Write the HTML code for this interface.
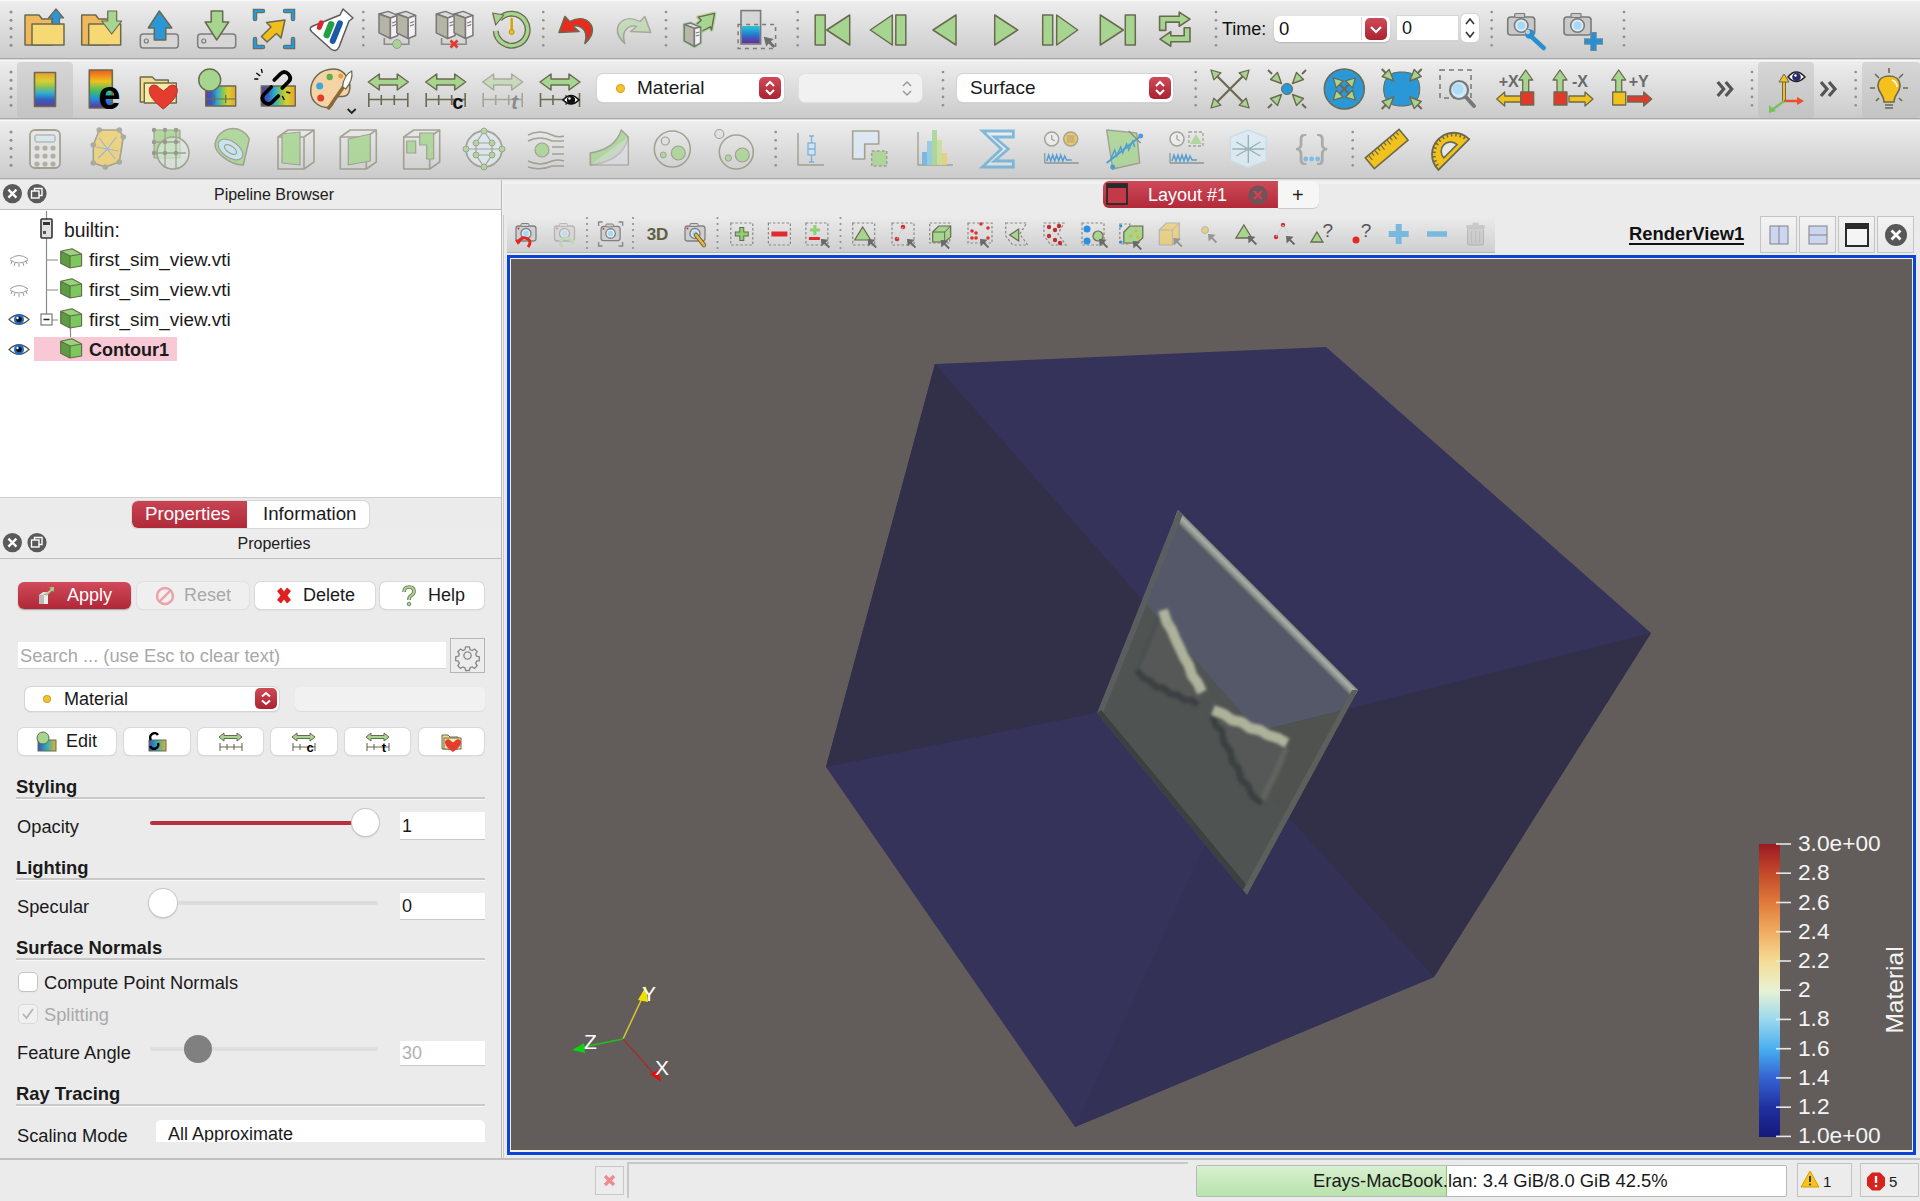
<!DOCTYPE html>
<html><head><meta charset="utf-8">
<style>
*{margin:0;padding:0;box-sizing:border-box}
html,body{width:1920px;height:1201px;overflow:hidden;background:#ebebeb;font-family:"Liberation Sans",sans-serif;color:#1a1a1a}
.a{position:absolute}
.tb{position:absolute;left:0;width:1920px;height:59px;background:linear-gradient(#eeeeee,#cbcbcb);border-bottom:1px solid #a9a9a9}
.tb:after{content:"";position:absolute;left:0;right:0;bottom:-2px;height:1px;background:#d9d9d9}
.tb{box-shadow:inset 0 1px #f9f9f9}
.pressed{position:absolute;background:linear-gradient(#d6d6d6,#c3c3c3);border-radius:4px}
.combo{position:absolute;height:28px;background:#fff;border-radius:6px;box-shadow:0 0 0 1px #d4d4d4,0 1px 1.5px #b9b9b9;font-size:19px;line-height:28px;white-space:nowrap}
.rb{position:absolute;width:22px;height:22px;border-radius:5px;background:linear-gradient(#cf4a57,#ab2232)}
.rb svg{position:absolute;left:0;top:0}
.hdr{position:absolute;left:0;width:501px;padding-left:47px;height:30px;background:#ececec;border-bottom:1px solid #bdbdbd;font-size:16px;text-align:center;line-height:29px;color:#202020}
.t{position:absolute;white-space:nowrap;line-height:1}
.btn{position:absolute;height:27px;background:#fff;border-radius:6px;box-shadow:0 0 0 1px #d9d9d9,0 1px 1.5px #c5c5c5;font-size:18px;line-height:27px;white-space:nowrap}
.sh{position:absolute;left:16px;width:469px;font-weight:bold;font-size:18.4px;line-height:1;white-space:nowrap}
.ul{position:absolute;left:16px;width:469px;height:2px;background:#c9c9c9;box-shadow:0 1px #f8f8f8}
.fld{position:absolute;background:#fff;font-size:18px;white-space:nowrap;line-height:1;box-shadow:0 1px #c8c8c8}
</style></head>
<body>
<div class="tb" style="top:0"></div>
<div class="tb" style="top:60px"></div>
<div class="tb" style="top:120px"></div>
<div class="pressed" style="left:17px;top:62px;width:56px;height:56px"></div>
<div class="pressed" style="left:1758px;top:62px;width:56px;height:56px"></div>
<div class="pressed" style="left:1862px;top:62px;width:58px;height:56px"></div>

<!-- time widgets row1 -->
<div class="t" style="left:1222px;top:20px;font-size:18px;color:#111">Time:</div>
<div class="a" style="left:1274px;top:16px;width:116px;height:26px;background:#fff;border-radius:6px;box-shadow:0 1px 1.5px #b5b5b5"></div>
<div class="a" style="left:1361px;top:17px;width:1px;height:23px;background:#d8d8d8"></div>
<div class="t" style="left:1279px;top:20px;font-size:18.5px;color:#111">0</div>
<div class="rb" style="left:1365px;top:18px;width:22px;height:22px"><svg width="22" height="22"><path d="M6,9 L11,14 L16,9" fill="none" stroke="#fff" stroke-width="2.2"/></svg></div>
<div class="a" style="left:1397px;top:16px;width:61px;height:24px;background:#fff;box-shadow:0 0 0 1px #d5d5d5,0 1px 1px #c0c0c0;font-size:18px;line-height:24px;padding-left:5px">0</div>
<div class="a" style="left:1461px;top:14px;width:18px;height:28px;background:#fff;border-radius:5px;box-shadow:0 0 0 1px #d5d5d5,0 1px 1px #bbb"><svg width="18" height="28"><path d="M5,10 L9,5 L13,10 M5,18 L9,23 L13,18" fill="none" stroke="#333" stroke-width="1.6"/></svg></div>

<!-- combos row2 -->
<div class="combo" style="left:597px;top:74px;width:187px"><span class="a" style="left:20px;top:11px;width:7px;height:7px;border-radius:50%;background:#f2c230;box-shadow:0 0 0 1px #d0a020"></span><span class="a" style="left:40px;top:0">Material</span><div class="rb" style="left:162px;top:3px"><svg width="22" height="22"><path d="M7,9 L11,5 L15,9 M7,13 L11,17 L15,13" fill="none" stroke="#fff" stroke-width="2"/></svg></div></div>
<div class="combo" style="left:799px;top:74px;width:123px;background:#f1f1f1;box-shadow:0 0 0 1px #e0e0e0,0 1px 1px #d0d0d0"><svg class="a" style="left:101px;top:5px" width="14" height="20"><path d="M3,7 L7,3 L11,7 M3,12 L7,16 L11,12" fill="none" stroke="#999" stroke-width="1.5"/></svg></div>
<div class="combo" style="left:957px;top:74px;width:216px"><span class="a" style="left:13px;top:0">Surface</span><div class="rb" style="left:192px;top:3px"><svg width="22" height="22"><path d="M7,9 L11,5 L15,9 M7,13 L11,17 L15,13" fill="none" stroke="#fff" stroke-width="2"/></svg></div></div>

<svg class="a" style="left:0;top:0" width="1920" height="180"><circle cx="11" cy="12" r="1.5" fill="#8f8f8f"/><circle cx="11" cy="20.3" r="1.5" fill="#8f8f8f"/><circle cx="11" cy="28.6" r="1.5" fill="#8f8f8f"/><circle cx="11" cy="36.9" r="1.5" fill="#8f8f8f"/><circle cx="11" cy="45.2" r="1.5" fill="#8f8f8f"/><g transform="translate(45,29)"><path d="M-20,-14 h14 l3,4 h10 v26 h-27z" fill="#f0b85c" stroke="#6b6950" stroke-width="1.5" stroke-linejoin="round"/><rect x="-13" y="-5" width="32" height="21" fill="#f6d874" stroke="#6b6950" stroke-width="1.5" stroke-linejoin="round"/><path d="M11,-20 L18.5,-11 L14.5,-11 L14.5,-5 L7.5,-5 L7.5,-11 L3.5,-11Z" fill="#2a97d6" stroke="#6b6950" stroke-width="1.2" stroke-linejoin="round"/></g><g transform="translate(101.7,29)"><path d="M-20,-14 h14 l3,4 h10 v26 h-27z" fill="#f0b85c" stroke="#6b6950" stroke-width="1.5" stroke-linejoin="round"/><rect x="-13" y="-5" width="32" height="21" fill="#f6d874" stroke="#6b6950" stroke-width="1.5" stroke-linejoin="round"/><path d="M6,-18 h9 v10 h5 l-10,13 l-10,-13 h6z" fill="#a6d590" stroke="#6b6950" stroke-width="1.2" stroke-linejoin="round"/></g><g transform="translate(159.3,29)"><rect x="-19" y="5" width="38" height="14" rx="3" fill="#d6d6d6" stroke="#7d7d7d" stroke-width="1.5"/><circle cx="-13" cy="12" r="2" fill="none" stroke="#7d7d7d" stroke-width="1.2"/><path d="M0,-18 L12.5,-1 L6.5,-1 L6.5,11 L-5,11 L-5,-1 L-11,-1Z" fill="#2a97d6" stroke="#6b6950" stroke-width="1.5" stroke-linejoin="round"/></g><g transform="translate(216.7,29)"><rect x="-19" y="5" width="38" height="14" rx="3" fill="#d6d6d6" stroke="#7d7d7d" stroke-width="1.5"/><circle cx="-13" cy="12" r="2" fill="none" stroke="#7d7d7d" stroke-width="1.2"/><path d="M-5.5,-18 h11.5 v11 h6 L0,11 L-11.5,-7 h6z" fill="#a6d590" stroke="#6b6950" stroke-width="1.5" stroke-linejoin="round"/></g><g transform="translate(274,29)"><path d="M-19,-10 V-18 H-11" fill="none" stroke="#6b6950" stroke-width="4.5" stroke-linecap="round"/><path d="M-19,-10 V-18 H-11" fill="none" stroke="#2a97d6" stroke-width="2.5" stroke-linecap="square"/><path d="M-19,10 V18 H-11" fill="none" stroke="#6b6950" stroke-width="4.5" stroke-linecap="round"/><path d="M-19,10 V18 H-11" fill="none" stroke="#2a97d6" stroke-width="2.5" stroke-linecap="square"/><path d="M19,-10 V-18 H11" fill="none" stroke="#6b6950" stroke-width="4.5" stroke-linecap="round"/><path d="M19,-10 V-18 H11" fill="none" stroke="#2a97d6" stroke-width="2.5" stroke-linecap="square"/><path d="M19,10 V18 H11" fill="none" stroke="#6b6950" stroke-width="4.5" stroke-linecap="round"/><path d="M19,10 V18 H11" fill="none" stroke="#2a97d6" stroke-width="2.5" stroke-linecap="square"/><path d="M11,-9 L7,9 L2.5,4.5 L-7,13 L-12.5,7.5 L-3,-2 L-7.5,-6.5Z" fill="#f1be1c" stroke="#6b6950" stroke-width="1.5" stroke-linejoin="round"/></g><g transform="translate(330,29)"><path d="M13,-20 L23,-11 L19,-8 L9,18 Q6,24 1,20 L-18,3 Q-22,-1 -17,-3 L10,-14Z" fill="#fff" stroke="#5a5a5a" stroke-width="1.5" stroke-linejoin="round"/><g transform="rotate(22)"><rect x="-12" y="-3" width="5" height="10" rx="2.5" fill="#d8262c" transform="translate(-1,-2)"/><rect x="-4" y="-8" width="6.5" height="18" rx="3" fill="#22a043"/><rect x="4" y="-12" width="6" height="25" rx="3" fill="#1d59a8"/></g></g><g transform="translate(396.7,29)"><path d="M-12.4,9 V15.2 H12.1 V9.5" fill="none" stroke="#8a8a8a" stroke-width="1.6"/><g transform="translate(0,0)"><path d="M-17.7,-15 L-8.5,-17.6 L1.1,-13.6 L-6.3,-11Z" fill="#d9dcdc" stroke="#787878" stroke-width="1.5" stroke-linejoin="round"/><path d="M-17.7,-15 L-6.3,-11 L-6.3,9.5 L-17.7,3.9Z" fill="#b5b5a5" stroke="#787878" stroke-width="1.5" stroke-linejoin="round"/><path d="M-6.3,-11 L1.1,-13.6 L1.1,6.5 L-6.3,9.5Z" fill="#f6f0f4" stroke="#787878" stroke-width="1.5" stroke-linejoin="round"/><path d="M-4.5,-6 L-0.5,-7.5 M-4.5,-3 L-0.5,-4.5" stroke="#787878" stroke-width="1.2"/></g><g transform="translate(17.8,0)"><path d="M-17.7,-15 L-8.5,-17.6 L1.1,-13.6 L-6.3,-11Z" fill="#d9dcdc" stroke="#787878" stroke-width="1.5" stroke-linejoin="round"/><path d="M-17.7,-15 L-6.3,-11 L-6.3,9.5 L-17.7,3.9Z" fill="#b5b5a5" stroke="#787878" stroke-width="1.5" stroke-linejoin="round"/><path d="M-6.3,-11 L1.1,-13.6 L1.1,6.5 L-6.3,9.5Z" fill="#f6f0f4" stroke="#787878" stroke-width="1.5" stroke-linejoin="round"/><path d="M-4.5,-6 L-0.5,-7.5 M-4.5,-3 L-0.5,-4.5" stroke="#787878" stroke-width="1.2"/></g><circle cx="0.3" cy="15" r="4.4" fill="#a6d590" stroke="#999" stroke-width="1"/></g><g transform="translate(454,29)"><path d="M-12.4,9 V15.2 H12.1 V9.5" fill="none" stroke="#8a8a8a" stroke-width="1.6"/><g transform="translate(0,0)"><path d="M-17.7,-15 L-8.5,-17.6 L1.1,-13.6 L-6.3,-11Z" fill="#d9dcdc" stroke="#787878" stroke-width="1.5" stroke-linejoin="round"/><path d="M-17.7,-15 L-6.3,-11 L-6.3,9.5 L-17.7,3.9Z" fill="#b5b5a5" stroke="#787878" stroke-width="1.5" stroke-linejoin="round"/><path d="M-6.3,-11 L1.1,-13.6 L1.1,6.5 L-6.3,9.5Z" fill="#f6f0f4" stroke="#787878" stroke-width="1.5" stroke-linejoin="round"/><path d="M-4.5,-6 L-0.5,-7.5 M-4.5,-3 L-0.5,-4.5" stroke="#787878" stroke-width="1.2"/></g><g transform="translate(17.8,0)"><path d="M-17.7,-15 L-8.5,-17.6 L1.1,-13.6 L-6.3,-11Z" fill="#d9dcdc" stroke="#787878" stroke-width="1.5" stroke-linejoin="round"/><path d="M-17.7,-15 L-6.3,-11 L-6.3,9.5 L-17.7,3.9Z" fill="#b5b5a5" stroke="#787878" stroke-width="1.5" stroke-linejoin="round"/><path d="M-6.3,-11 L1.1,-13.6 L1.1,6.5 L-6.3,9.5Z" fill="#f6f0f4" stroke="#787878" stroke-width="1.5" stroke-linejoin="round"/><path d="M-4.5,-6 L-0.5,-7.5 M-4.5,-3 L-0.5,-4.5" stroke="#787878" stroke-width="1.2"/></g><path d="M-3.5,11.5 l7,7 M3.5,11.5 l-7,7" stroke="#e23a2c" stroke-width="2.8"/></g><g transform="translate(511.7,29)"><path d="M-12,-10 A16,16 0 1 1 -16,2" fill="none" stroke="#6b6950" stroke-width="6"/><path d="M-12,-10 A16,16 0 1 1 -16,2" fill="none" stroke="#a6d590" stroke-width="3.4"/><path d="M-19,-16 L-8,-14 L-16,-4z" fill="#a6d590" stroke="#6b6950" stroke-width="1.2" stroke-linejoin="round"/><path d="M0,-10 v12" stroke="#d9a400" stroke-width="2.5" stroke-linecap="round"/><circle cx="0" cy="3" r="2.5" fill="#f1be1c" stroke="#b08800" stroke-width="0.8"/></g><g transform="translate(576.7,29)"><path transform="translate(0,1.5) scale(1.18,1)" d="M-15,2 L-10,-14 L-6,-9 Q6,-16 12,-6 Q16,3 7,13 Q10,2 4,-3 Q0,-6 -3,-4 L2,1Z" fill="#ea2a1e" stroke="#6b6950" stroke-width="1.4" stroke-linejoin="round"/></g><g transform="translate(633,29)"><g opacity="0.45"><path transform="translate(0,1.5) scale(1.18,1)" d="M15,2 L10,-14 L6,-9 Q-6,-16 -12,-6 Q-16,3 -7,13 Q-10,2 -4,-3 Q0,-6 3,-4 L-2,1Z" fill="#a6d590" stroke="#6b6950" stroke-width="1.4" stroke-linejoin="round"/></g></g><g transform="translate(698.3,29)"><path d="M2.9,2.5 L12,-2.2 L13.25,0.9 L16.2,-15.6 L-0.2,-11.9 L2.9,-8.75 L-1.4,-5Z" fill="#a6d590" stroke="#a6d590" stroke-width="4" stroke-linejoin="round" opacity="0.8"/><path d="M2.9,2.5 L12,-2.2 L13.25,0.9 L16.2,-15.6 L-0.2,-11.9 L2.9,-8.75 L-1.4,-5Z" fill="#a6d590" stroke="#6b6950" stroke-width="1.4" stroke-linejoin="round"/><path d="M-14,-4.4 L-7.7,-5.9 L2.3,-1.9 L-3.9,-0.6 L-3.9,17.5 L-14,11.9Z M2.3,-1.9 L2.3,13.9 L-3.9,17.5" fill="#a6d590" stroke="#a6d590" stroke-width="3.5" stroke-linejoin="round" opacity="0.8"/><path d="M-14,-4.4 L-7.7,-5.9 L2.3,-1.9 L-3.9,-0.6Z" fill="#dadcdc" stroke="#787878" stroke-width="1.5" stroke-linejoin="round"/><path d="M-14,-4.4 L-3.9,-0.6 L-3.9,17.5 L-14,11.9Z" fill="#b8b8a8" stroke="#787878" stroke-width="1.5" stroke-linejoin="round"/><path d="M-3.9,-0.6 L2.3,-1.9 L2.3,13.9 L-3.9,17.5Z" fill="#f6f0f4" stroke="#787878" stroke-width="1.5" stroke-linejoin="round"/><path d="M-2.5,4 L1,3 M-2.5,7 L1,6" stroke="#787878" stroke-width="1.1"/></g><g transform="translate(756.7,29)"><defs><linearGradient id="gcs" x1="0" y1="0" x2="0" y2="1"><stop offset="0" stop-color="#3ac09a"/><stop offset="0.12" stop-color="#22b8e0"/><stop offset="0.55" stop-color="#2a70c8"/><stop offset="1" stop-color="#6a2aa0"/></linearGradient></defs><rect x="-15.7" y="-18.4" width="19.6" height="33.4" fill="#d6d6d6" stroke="#7a7a7a" stroke-width="1.6"/><rect x="-14.9" y="-3" width="18" height="17.2" fill="url(#gcs)"/><rect x="-18.6" y="-4.4" width="37.5" height="23.8" fill="none" stroke="#7a7a7a" stroke-width="1.5" stroke-dasharray="4,4"/><path d="M7,7.8 L17,10 L14,12.5 L18.5,17 L16.5,19 L12,14.5 L9.5,17.5Z" fill="#6e6e6e"/></g><g transform="translate(832.7,29)"><rect x="-17.5" y="-14" width="10" height="30" fill="#a6d590" stroke="#6b6950" stroke-width="1.5" stroke-linejoin="round"/><path d="M17,-14 L-6,1 L17,16Z" fill="#a6d590" stroke="#6b6950" stroke-width="1.5" stroke-linejoin="round"/></g><g transform="translate(889.3,29)"><path d="M3,-14 L-19,1 L3,16Z" fill="#a6d590" stroke="#6b6950" stroke-width="1.5" stroke-linejoin="round"/><rect x="6.5" y="-14" width="10" height="30" fill="#a6d590" stroke="#6b6950" stroke-width="1.5" stroke-linejoin="round"/></g><g transform="translate(944,29)"><path d="M12,-14 L-11,1 L12,16Z" fill="#a6d590" stroke="#6b6950" stroke-width="1.5" stroke-linejoin="round"/></g><g transform="translate(1005.7,29)"><path d="M-11,-14 L12,1 L-11,16Z" fill="#a6d590" stroke="#6b6950" stroke-width="1.5" stroke-linejoin="round"/></g><g transform="translate(1060.7,29)"><rect x="-18" y="-14" width="10" height="30" fill="#a6d590" stroke="#6b6950" stroke-width="1.5" stroke-linejoin="round"/><path d="M-4,-14 L17,1 L-4,16Z" fill="#a6d590" stroke="#6b6950" stroke-width="1.5" stroke-linejoin="round"/></g><g transform="translate(1117.3,29)"><path d="M-17,-14 L6,1 L-17,16Z" fill="#a6d590" stroke="#6b6950" stroke-width="1.5" stroke-linejoin="round"/><rect x="8" y="-14" width="10" height="30" fill="#a6d590" stroke="#6b6950" stroke-width="1.5" stroke-linejoin="round"/></g><g transform="translate(1175,29)"><path d="M-15.4,-12.75 H4.2 V-16.9 L15,-9.8 L4.2,-2.75 V-6.9 H-9.2 V1.4 H-15.4Z" fill="#a6d590" stroke="#6b6950" stroke-width="1.6" stroke-linejoin="round"/><path d="M15,-1.3 V12.7 H-4.2 V17.25 L-15,10.2 L-4.2,2.7 V6.8 H9.2 V-1.3Z" fill="#a6d590" stroke="#6b6950" stroke-width="1.6" stroke-linejoin="round"/></g><g transform="translate(1526.7,29)"><rect x="-19" y="-12" width="27" height="18" rx="3" fill="#c9c9c9" stroke="#7a7a7a" stroke-width="1.6"/><rect x="-12" y="-15.5" width="10" height="4" rx="1" fill="#c9c9c9" stroke="#7a7a7a" stroke-width="1.2"/><circle cx="-5.5" cy="-3.5" r="6.8" fill="#d9ecf8" stroke="#7a7a7a" stroke-width="1.6"/><circle cx="-5.5" cy="-3.5" r="4" fill="#a9d8f4"/><path d="M4,7 L17,19" stroke="#2a8fcf" stroke-width="4.5" stroke-linecap="round"/><circle cx="3" cy="5" r="4.8" fill="#2a8fcf"/><circle cx="1" cy="3" r="2.3" fill="#c9c9c9"/></g><g transform="translate(1583,29)"><rect x="-19" y="-12" width="27" height="18" rx="3" fill="#c9c9c9" stroke="#7a7a7a" stroke-width="1.6"/><rect x="-12" y="-15.5" width="10" height="4" rx="1" fill="#c9c9c9" stroke="#7a7a7a" stroke-width="1.2"/><circle cx="-5.5" cy="-3.5" r="6.8" fill="#d9ecf8" stroke="#7a7a7a" stroke-width="1.6"/><circle cx="-5.5" cy="-3.5" r="4" fill="#a9d8f4"/><path d="M10.5,3 v19 M1,12.5 h19" stroke="#6b8aa0" stroke-width="6.5"/><path d="M10.5,4 v17 M2,12.5 h17" stroke="#2a8fcf" stroke-width="4.5"/></g><circle cx="363.3" cy="12" r="1.3" fill="#8f8f8f"/><circle cx="363.3" cy="20.3" r="1.3" fill="#8f8f8f"/><circle cx="363.3" cy="28.6" r="1.3" fill="#8f8f8f"/><circle cx="363.3" cy="36.9" r="1.3" fill="#8f8f8f"/><circle cx="363.3" cy="45.2" r="1.3" fill="#8f8f8f"/><circle cx="543.3" cy="12" r="1.3" fill="#8f8f8f"/><circle cx="543.3" cy="20.3" r="1.3" fill="#8f8f8f"/><circle cx="543.3" cy="28.6" r="1.3" fill="#8f8f8f"/><circle cx="543.3" cy="36.9" r="1.3" fill="#8f8f8f"/><circle cx="543.3" cy="45.2" r="1.3" fill="#8f8f8f"/><circle cx="666" cy="12" r="1.3" fill="#8f8f8f"/><circle cx="666" cy="20.3" r="1.3" fill="#8f8f8f"/><circle cx="666" cy="28.6" r="1.3" fill="#8f8f8f"/><circle cx="666" cy="36.9" r="1.3" fill="#8f8f8f"/><circle cx="666" cy="45.2" r="1.3" fill="#8f8f8f"/><circle cx="797.7" cy="12" r="1.3" fill="#8f8f8f"/><circle cx="797.7" cy="20.3" r="1.3" fill="#8f8f8f"/><circle cx="797.7" cy="28.6" r="1.3" fill="#8f8f8f"/><circle cx="797.7" cy="36.9" r="1.3" fill="#8f8f8f"/><circle cx="797.7" cy="45.2" r="1.3" fill="#8f8f8f"/><circle cx="1216" cy="12" r="1.3" fill="#8f8f8f"/><circle cx="1216" cy="20.3" r="1.3" fill="#8f8f8f"/><circle cx="1216" cy="28.6" r="1.3" fill="#8f8f8f"/><circle cx="1216" cy="36.9" r="1.3" fill="#8f8f8f"/><circle cx="1216" cy="45.2" r="1.3" fill="#8f8f8f"/><circle cx="1491.7" cy="12" r="1.3" fill="#8f8f8f"/><circle cx="1491.7" cy="20.3" r="1.3" fill="#8f8f8f"/><circle cx="1491.7" cy="28.6" r="1.3" fill="#8f8f8f"/><circle cx="1491.7" cy="36.9" r="1.3" fill="#8f8f8f"/><circle cx="1491.7" cy="45.2" r="1.3" fill="#8f8f8f"/><circle cx="1624" cy="12" r="1.3" fill="#8f8f8f"/><circle cx="1624" cy="20.3" r="1.3" fill="#8f8f8f"/><circle cx="1624" cy="28.6" r="1.3" fill="#8f8f8f"/><circle cx="1624" cy="36.9" r="1.3" fill="#8f8f8f"/><circle cx="1624" cy="45.2" r="1.3" fill="#8f8f8f"/><circle cx="11" cy="72" r="1.5" fill="#8f8f8f"/><circle cx="11" cy="80.3" r="1.5" fill="#8f8f8f"/><circle cx="11" cy="88.6" r="1.5" fill="#8f8f8f"/><circle cx="11" cy="96.9" r="1.5" fill="#8f8f8f"/><circle cx="11" cy="105.2" r="1.5" fill="#8f8f8f"/><g transform="translate(45,89)"><defs><linearGradient id="gcb" x1="0" y1="0" x2="0" y2="1"><stop offset="0" stop-color="#e8a030"/><stop offset="0.25" stop-color="#d8d030"/><stop offset="0.45" stop-color="#80c060"/><stop offset="0.6" stop-color="#30b0d0"/><stop offset="0.8" stop-color="#3060c0"/><stop offset="1" stop-color="#6a3a98"/></linearGradient></defs><rect x="-10.5" y="-16.5" width="21" height="34" fill="url(#gcb)" stroke="#6b6950" stroke-width="1.6" stroke-linejoin="round"/></g><g transform="translate(103.3,89)"><defs><linearGradient id="gce" x1="0" y1="0" x2="0" y2="1"><stop offset="0" stop-color="#f05a1a"/><stop offset="0.3" stop-color="#f0c020"/><stop offset="0.55" stop-color="#40c060"/><stop offset="0.75" stop-color="#2090e0"/><stop offset="1" stop-color="#6030a0"/></linearGradient></defs><rect x="-14" y="-19" width="23" height="38" fill="url(#gce)" stroke="#6b6950" stroke-width="1.6" stroke-linejoin="round"/><text x="6" y="19.5" font-family="Liberation Sans" font-weight="bold" font-size="40" text-anchor="middle" fill="#000">e</text></g><g transform="translate(159.3,89)"><path d="M-19,-12 h12 l3,3 h13 v22 h-28z" fill="#f3dc8c" stroke="#6b6950" stroke-width="1.4" stroke-linejoin="round"/><rect x="-15" y="-6" width="32" height="20" fill="#f8eba8" stroke="#6b6950" stroke-width="1.4" stroke-linejoin="round"/><path d="M4,20 C-6,12 -10,7 -10,1 C-10,-4 -4,-6 0,-1 L4,2 L8,-1 C12,-6 18,-4 18,1 C18,7 14,12 4,20Z" fill="#e43c2e" stroke="#b7302a" stroke-width="1"/></g><g transform="translate(216.7,89)"><defs><linearGradient id="gcm1" x1="1" y1="0" x2="0" y2="0"><stop offset="0" stop-color="#e8a030"/><stop offset="0.25" stop-color="#d8d030"/><stop offset="0.45" stop-color="#80c060"/><stop offset="0.6" stop-color="#30b0d0"/><stop offset="0.8" stop-color="#3060c0"/><stop offset="1" stop-color="#6a3a98"/></linearGradient></defs><rect x="-11" y="-3" width="30" height="20" fill="url(#gcm1)" stroke="#6b6950" stroke-width="1.4" stroke-linejoin="round"/><path d="M-11,10 h30 M-2,6 v8 M9,6 v8" stroke="#6b6950" stroke-width="1.2"/><circle cx="-7" cy="-9" r="11" fill="#a6d590" stroke="#6b6950" stroke-width="1.4" stroke-linejoin="round"/></g><g transform="translate(273.3,89)"><defs><linearGradient id="gcm2" x1="1" y1="0" x2="0" y2="0"><stop offset="0" stop-color="#e8a030"/><stop offset="0.25" stop-color="#d8d030"/><stop offset="0.45" stop-color="#80c060"/><stop offset="0.6" stop-color="#30b0d0"/><stop offset="0.8" stop-color="#3060c0"/><stop offset="1" stop-color="#6a3a98"/></linearGradient></defs><rect x="-12" y="-3" width="34" height="20" fill="url(#gcm2)" stroke="#6b6950" stroke-width="1.4" stroke-linejoin="round"/><path d="M1,-9 L7,-15 Q11,-19 15,-15 Q19,-11 15,-7 L9,-1" fill="none" stroke="#000" stroke-width="3.8" stroke-linecap="round"/><path d="M-2,-2 L-9,5 Q-13,9 -9,13 Q-5,17 -1,13 L5,7" fill="none" stroke="#000" stroke-width="3.8" stroke-linecap="round"/><path d="M-17,-16 l4,3 M-12,-20 l1,4 M-19,-10 l4,0 M13,3 l4,1 M9,7 l2,4" stroke="#000" stroke-width="1.3"/></g><g transform="translate(331.7,89)"><path d="M2,-20 C-12,-20 -21,-10 -21,2 C-21,14 -10,20 -2,18 C4,16 0,10 4,8 C8,6 14,10 17,4 C21,-6 14,-20 2,-20Z" fill="#f5d3a5" stroke="#6b6950" stroke-width="1.5"/><circle cx="-12" cy="-3" r="3.5" fill="#3aa8e0"/><circle cx="-2" cy="-12" r="3.2" fill="#5fae4a"/><circle cx="-11" cy="9" r="3.5" fill="#e23a2c"/><circle cx="9" cy="-13" r="2.5" fill="#e8a030"/><path d="M-3,19 L13,-4" stroke="#8a6a3a" stroke-width="3.5" stroke-linecap="round"/><path d="M11,-2 C11,-10 16,-16 20,-18 C21,-13 19,-6 14,0Z" fill="#fff" stroke="#6b6950" stroke-width="1.2"/><path d="M16,20 l4,4 l4,-4" fill="none" stroke="#222" stroke-width="1.8"/></g><g transform="translate(388.3,89)"><g opacity="1"><path d="M-20,-7 L-9,-15 V-10 H9 V-15 L20,-7 L9,1 V-4 H-9 V1Z" fill="#a6d590" stroke="#6b6950" stroke-width="1.5" stroke-linejoin="round"/><path d="M-19.5,10.5 H19.5 M-19.5,4 v14 M19.5,4 v14 M-7,6 v10 M6,6 v10" stroke="#6b6950" stroke-width="1.6"/></g></g><g transform="translate(445.7,89)"><g opacity="1"><path d="M-20,-7 L-9,-15 V-10 H9 V-15 L20,-7 L9,1 V-4 H-9 V1Z" fill="#a6d590" stroke="#6b6950" stroke-width="1.5" stroke-linejoin="round"/><path d="M-19.5,10.5 H19.5 M-19.5,4 v14 M19.5,4 v14 M-7,6 v10 M6,6 v10" stroke="#6b6950" stroke-width="1.6"/></g><text x="12" y="20" font-family="Liberation Sans" font-weight="bold" font-size="20" text-anchor="middle" fill="#111">c</text></g><g transform="translate(502.7,89)"><g opacity="0.45"><path d="M-20,-7 L-9,-15 V-10 H9 V-15 L20,-7 L9,1 V-4 H-9 V1Z" fill="#a6d590" stroke="#6b6950" stroke-width="1.5" stroke-linejoin="round"/><path d="M-19.5,10.5 H19.5 M-19.5,4 v14 M19.5,4 v14 M-7,6 v10 M6,6 v10" stroke="#6b6950" stroke-width="1.6"/></g><text x="12" y="20" font-family="Liberation Sans" font-weight="bold" font-style="italic" font-size="20" text-anchor="middle" fill="#8a8a8a">t</text></g><g transform="translate(560,89)"><g opacity="1"><path d="M-20,-7 L-9,-15 V-10 H9 V-15 L20,-7 L9,1 V-4 H-9 V1Z" fill="#a6d590" stroke="#6b6950" stroke-width="1.5" stroke-linejoin="round"/><path d="M-19.5,10.5 H19.5 M-19.5,4 v14 M19.5,4 v14 M-7,6 v10 M6,6 v10" stroke="#6b6950" stroke-width="1.6"/></g><path d="M3,11 Q11,2 19,11 Q11,19 3,11Z" fill="#fff" stroke="#111" stroke-width="1.6"/><circle cx="11" cy="11" r="4.2" fill="#111"/><circle cx="9.5" cy="9.5" r="1.2" fill="#fff"/></g><g transform="translate(1230,89)"><path d="M-14,-14 L14,14 M14,-14 L-14,14" stroke="#6b6950" stroke-width="2.2"/><path d="M0,0 L-9,-5 L-9,5Z" transform="translate(19,-19) rotate(-45)" fill="#a6d590" stroke="#6b6950" stroke-width="1.3" stroke-linejoin="round"/><path d="M0,0 L-9,-5 L-9,5Z" transform="translate(-19,-19) rotate(-135)" fill="#a6d590" stroke="#6b6950" stroke-width="1.3" stroke-linejoin="round"/><path d="M0,0 L-9,-5 L-9,5Z" transform="translate(19,19) rotate(45)" fill="#a6d590" stroke="#6b6950" stroke-width="1.3" stroke-linejoin="round"/><path d="M0,0 L-9,-5 L-9,5Z" transform="translate(-19,19) rotate(135)" fill="#a6d590" stroke="#6b6950" stroke-width="1.3" stroke-linejoin="round"/></g><g transform="translate(1287,89)"><circle cx="0" cy="0" r="5.5" fill="#2a97d6" stroke="#6b6950" stroke-width="1"/><g transform="rotate(0)"><path d="M15,-15 L19,-19" stroke="#6b6950" stroke-width="2"/><path d="M5.5,-5.5 L16.5,-9.5 L9.5,-16.5Z" fill="#a6d590" stroke="#6b6950" stroke-width="1.4" stroke-linejoin="round"/></g><g transform="rotate(90)"><path d="M15,-15 L19,-19" stroke="#6b6950" stroke-width="2"/><path d="M5.5,-5.5 L16.5,-9.5 L9.5,-16.5Z" fill="#a6d590" stroke="#6b6950" stroke-width="1.4" stroke-linejoin="round"/></g><g transform="rotate(180)"><path d="M15,-15 L19,-19" stroke="#6b6950" stroke-width="2"/><path d="M5.5,-5.5 L16.5,-9.5 L9.5,-16.5Z" fill="#a6d590" stroke="#6b6950" stroke-width="1.4" stroke-linejoin="round"/></g><g transform="rotate(270)"><path d="M15,-15 L19,-19" stroke="#6b6950" stroke-width="2"/><path d="M5.5,-5.5 L16.5,-9.5 L9.5,-16.5Z" fill="#a6d590" stroke="#6b6950" stroke-width="1.4" stroke-linejoin="round"/></g></g><g transform="translate(1344.3,89)"><circle cx="0" cy="0" r="20" fill="#2a97d6" stroke="#6b6950" stroke-width="1.5"/><path d="M-9,-9 L9,9 M9,-9 L-9,9" stroke="#6b6950" stroke-width="1.8"/><path d="M0,0 L-9,-5 L-9,5Z" transform="translate(11,-11) rotate(-45)" fill="#a6d590" stroke="#6b6950" stroke-width="1.3" stroke-linejoin="round"/><path d="M0,0 L-9,-5 L-9,5Z" transform="translate(-11,-11) rotate(-135)" fill="#a6d590" stroke="#6b6950" stroke-width="1.3" stroke-linejoin="round"/><path d="M0,0 L-9,-5 L-9,5Z" transform="translate(11,11) rotate(45)" fill="#a6d590" stroke="#6b6950" stroke-width="1.3" stroke-linejoin="round"/><path d="M0,0 L-9,-5 L-9,5Z" transform="translate(-11,11) rotate(135)" fill="#a6d590" stroke="#6b6950" stroke-width="1.3" stroke-linejoin="round"/></g><g transform="translate(1401.7,89)"><rect x="-18" y="-17" width="36" height="34" rx="15" fill="#2a97d6" stroke="#6b6950" stroke-width="1"/><g transform="rotate(0)"><path d="M16,-16 L20,-20" stroke="#6b6950" stroke-width="2"/><path d="M8,-8 L19.5,-12.5 L12.5,-19.5Z" fill="#a6d590" stroke="#6b6950" stroke-width="1.4" stroke-linejoin="round"/></g><g transform="rotate(90)"><path d="M16,-16 L20,-20" stroke="#6b6950" stroke-width="2"/><path d="M8,-8 L19.5,-12.5 L12.5,-19.5Z" fill="#a6d590" stroke="#6b6950" stroke-width="1.4" stroke-linejoin="round"/></g><g transform="rotate(180)"><path d="M16,-16 L20,-20" stroke="#6b6950" stroke-width="2"/><path d="M8,-8 L19.5,-12.5 L12.5,-19.5Z" fill="#a6d590" stroke="#6b6950" stroke-width="1.4" stroke-linejoin="round"/></g><g transform="rotate(270)"><path d="M16,-16 L20,-20" stroke="#6b6950" stroke-width="2"/><path d="M8,-8 L19.5,-12.5 L12.5,-19.5Z" fill="#a6d590" stroke="#6b6950" stroke-width="1.4" stroke-linejoin="round"/></g></g><g transform="translate(1459,89)"><rect x="-19" y="-19" width="31" height="28" fill="none" stroke="#777" stroke-width="1.5" stroke-dasharray="5,4"/><path d="M6,7 L15,17" stroke="#777" stroke-width="4" stroke-linecap="round"/><circle cx="0" cy="1" r="9" fill="#cfe8f7" stroke="#777" stroke-width="2.2"/><circle cx="-1" cy="0" r="5.5" fill="#aedcf5"/></g><g transform="translate(1516.7,89)"><path d="M6,14 V-9 H2 L9,-19 L16,-9 H12 V14Z" fill="#a6d590" stroke="#6b6950" stroke-width="1.3" stroke-linejoin="round"/><path d="M6,7 H-12 V3 L-20,10 L-12,17 V13 H6Z" fill="#f1c21c" stroke="#6b6950" stroke-width="1.3" stroke-linejoin="round"/><rect x="4" y="3" width="13" height="13" fill="#e03a2a" stroke="#6b6950" stroke-width="1.3" stroke-linejoin="round"/><text x="-8" y="-2" font-family="Liberation Sans" font-weight="bold" font-size="16" text-anchor="middle" fill="#6a6a6a">+X</text></g><g transform="translate(1573,89)"><path d="M-16,14 V-9 H-20 L-13,-19 L-6,-9 H-10 V14Z" fill="#a6d590" stroke="#6b6950" stroke-width="1.3" stroke-linejoin="round"/><path d="M-4,7 H12 V3 L20,10 L12,17 V13 H-4Z" fill="#f1c21c" stroke="#6b6950" stroke-width="1.3" stroke-linejoin="round"/><rect x="-19" y="3" width="13" height="13" fill="#e03a2a" stroke="#6b6950" stroke-width="1.3" stroke-linejoin="round"/><text x="7" y="-2" font-family="Liberation Sans" font-weight="bold" font-size="16" text-anchor="middle" fill="#6a6a6a">-X</text></g><g transform="translate(1631.7,89)"><path d="M-16,14 V-9 H-20 L-13,-19 L-6,-9 H-10 V14Z" fill="#a6d590" stroke="#6b6950" stroke-width="1.3" stroke-linejoin="round"/><path d="M-4,7 H12 V3 L20,10 L12,17 V13 H-4Z" fill="#e03a2a" stroke="#6b6950" stroke-width="1.3" stroke-linejoin="round"/><rect x="-19" y="3" width="13" height="13" fill="#f1c21c" stroke="#6b6950" stroke-width="1.3" stroke-linejoin="round"/><text x="7" y="-2" font-family="Liberation Sans" font-weight="bold" font-size="16" text-anchor="middle" fill="#6a6a6a">+Y</text></g><g transform="translate(1725.7,89)"><path d="M-8,-7 L-2,0 L-8,7 M0,-7 L6,0 L0,7" fill="none" stroke="#555" stroke-width="3.2"/></g><g transform="translate(1786,89)"><path d="M-2,12 V-8" stroke="#6b6950" stroke-width="4"/><path d="M-2,12 V-8" stroke="#f1c21c" stroke-width="2"/><path d="M-7,-7 L-2,-15 L3,-7Z" fill="#f1c21c" stroke="#6b6950" stroke-width="1"/><path d="M-2,12 H12" stroke="#e8502a" stroke-width="2.5"/><path d="M11,8 L18,12 L11,16Z" fill="#e8502a"/><path d="M-2,12 L-14,21" stroke="#7ac05a" stroke-width="2.5"/><path d="M-17,16 L-17,24 L-10,22Z" fill="#7ac05a"/><path d="M2,-12 Q10,-22 19,-12 Q10,-3 2,-12Z" fill="#fff" stroke="#222" stroke-width="1.5"/><circle cx="10.5" cy="-12" r="4.3" fill="#2a2a6a"/><circle cx="9.5" cy="-13.5" r="1.2" fill="#fff"/></g><g transform="translate(1829,89)"><path d="M-8,-7 L-2,0 L-8,7 M0,-7 L6,0 L0,7" fill="none" stroke="#555" stroke-width="3.2"/></g><g transform="translate(1889,89)"><path d="M0,-21 v5 M-14,-15 l4,4 M14,-15 l-4,4 M-19,-1 h5 M19,-1 h-5 M-13,12 l3,-3 M13,12 l-3,-3" stroke="#6b6950" stroke-width="1.6"/><path d="M-5,13 C-5,6 -11,3 -11,-3 C-11,-10 -6,-13 0,-13 C6,-13 11,-10 11,-3 C11,3 5,6 5,13Z" fill="#f5c11c" stroke="#6b6950" stroke-width="1.6"/><path d="M-4,16 h8 M-4,19 h8" stroke="#6b6950" stroke-width="1.6"/><path d="M3,-9 q5,2 5,7" fill="none" stroke="#fff" stroke-width="1.5"/></g><circle cx="943" cy="72" r="1.3" fill="#8f8f8f"/><circle cx="943" cy="80.3" r="1.3" fill="#8f8f8f"/><circle cx="943" cy="88.6" r="1.3" fill="#8f8f8f"/><circle cx="943" cy="96.9" r="1.3" fill="#8f8f8f"/><circle cx="943" cy="105.2" r="1.3" fill="#8f8f8f"/><circle cx="1195.7" cy="72" r="1.3" fill="#8f8f8f"/><circle cx="1195.7" cy="80.3" r="1.3" fill="#8f8f8f"/><circle cx="1195.7" cy="88.6" r="1.3" fill="#8f8f8f"/><circle cx="1195.7" cy="96.9" r="1.3" fill="#8f8f8f"/><circle cx="1195.7" cy="105.2" r="1.3" fill="#8f8f8f"/><circle cx="1752" cy="72" r="1.3" fill="#8f8f8f"/><circle cx="1752" cy="80.3" r="1.3" fill="#8f8f8f"/><circle cx="1752" cy="88.6" r="1.3" fill="#8f8f8f"/><circle cx="1752" cy="96.9" r="1.3" fill="#8f8f8f"/><circle cx="1752" cy="105.2" r="1.3" fill="#8f8f8f"/><circle cx="1855.7" cy="72" r="1.3" fill="#8f8f8f"/><circle cx="1855.7" cy="80.3" r="1.3" fill="#8f8f8f"/><circle cx="1855.7" cy="88.6" r="1.3" fill="#8f8f8f"/><circle cx="1855.7" cy="96.9" r="1.3" fill="#8f8f8f"/><circle cx="1855.7" cy="105.2" r="1.3" fill="#8f8f8f"/><circle cx="11" cy="132" r="1.5" fill="#8f8f8f"/><circle cx="11" cy="140.3" r="1.5" fill="#8f8f8f"/><circle cx="11" cy="148.6" r="1.5" fill="#8f8f8f"/><circle cx="11" cy="156.9" r="1.5" fill="#8f8f8f"/><circle cx="11" cy="165.2" r="1.5" fill="#8f8f8f"/><g transform="translate(45,149)" opacity="0.82"><rect x="-15" y="-19" width="30" height="38" rx="5" fill="#e6e6e6" stroke="#959585" stroke-width="1.8" stroke-linejoin="round"/><rect x="-10" y="-14" width="20" height="7" rx="1.5" fill="#d5e7f2" stroke="#959585" stroke-width="1" stroke-linejoin="round"/><circle cx="-8" cy="-1" r="2.6" fill="#a8a898"/><circle cx="-8" cy="7" r="2.6" fill="#a8a898"/><circle cx="-8" cy="15" r="2.6" fill="#a8a898"/><circle cx="0" cy="-1" r="2.6" fill="#a8a898"/><circle cx="0" cy="7" r="2.6" fill="#a8a898"/><circle cx="0" cy="15" r="2.6" fill="#a8a898"/><circle cx="8" cy="-1" r="2.6" fill="#a8a898"/><circle cx="8" cy="7" r="2.6" fill="#a8a898"/><circle cx="8" cy="15" r="2.6" fill="#a8a898"/></g><g transform="translate(107.3,149)" opacity="0.82"><path d="M-14,-4 L-8,-19 L12,-19 L16,-12 L12,13 L-2,18 L-14,14Z" fill="#f0d070" stroke="#959585" stroke-width="1.6" stroke-linejoin="round"/><circle cx="-14" cy="-4" r="2.8" fill="#a0a090"/><circle cx="-8" cy="-19" r="2.8" fill="#a0a090"/><circle cx="12" cy="-19" r="2.8" fill="#a0a090"/><circle cx="16" cy="-12" r="2.8" fill="#a0a090"/><circle cx="12" cy="13" r="2.8" fill="#a0a090"/><circle cx="-2" cy="18" r="2.8" fill="#a0a090"/><circle cx="-14" cy="14" r="2.8" fill="#a0a090"/><path d="M0,0 L-8,-11 M0,0 L9,-12 M0,0 L11,2 M0,0 L8,10 M0,0 L-9,9 M0,0 L-11,-2" stroke="#8ab0d0" stroke-width="1.2"/></g><g transform="translate(170,149)" opacity="0.82"><rect x="-16" y="-19" width="26" height="28" fill="#a6d590" stroke="#959585" stroke-width="1.2" stroke-linejoin="round"/><circle cx="3" cy="4" r="16" fill="#d8eee0" fill-opacity="0.6" stroke="#959585" stroke-width="1.6" stroke-linejoin="round"/><path d="M-16,-7 H10 M-16,4 H16 M-5,-19 V19 M6,-19 V19" stroke="#959585" stroke-width="1.3"/><circle cx="-16" cy="-19" r="2.2" fill="#8a8a7a"/><circle cx="-16" cy="-7" r="2.2" fill="#8a8a7a"/><circle cx="-16" cy="4" r="2.2" fill="#8a8a7a"/><circle cx="-5" cy="-19" r="2.2" fill="#8a8a7a"/><circle cx="-5" cy="-7" r="2.2" fill="#8a8a7a"/><circle cx="-5" cy="4" r="2.2" fill="#8a8a7a"/><circle cx="6" cy="-19" r="2.2" fill="#8a8a7a"/><circle cx="6" cy="-7" r="2.2" fill="#8a8a7a"/><circle cx="6" cy="4" r="2.2" fill="#8a8a7a"/></g><g transform="translate(233.3,149)" opacity="0.82"><path d="M-18,-6 A18,18 0 0 1 16,-10 L10,16 A20,10 30 0 1 -18,-6Z" fill="#a6d590" stroke="#959585" stroke-width="1.5" stroke-linejoin="round"/><ellipse cx="-2" cy="2" rx="14" ry="8" transform="rotate(35)" fill="#c5e5f0" stroke="#959585" stroke-width="1.2" stroke-linejoin="round"/><ellipse cx="-2" cy="2" rx="7" ry="3.5" transform="rotate(35)" fill="none" stroke="#959585" stroke-width="1.2" stroke-linejoin="round"/></g><g transform="translate(296,149)" opacity="0.82"><path d="M-18,-12 L-8,-19 H18 V13 L8,20 H-18Z" fill="none" stroke="#959585" stroke-width="1.6" stroke-linejoin="round"/><path d="M-18,-12 H8 V20 M8,-12 L18,-19" fill="none" stroke="#959585" stroke-width="1.6" stroke-linejoin="round"/><path d="M-14,-15 L4,-17 L4,16 L-14,14Z" fill="#a6d590" stroke="#959585" stroke-width="1.2" stroke-linejoin="round"/></g><g transform="translate(358.3,149)" opacity="0.82"><path d="M-18,-12 L-8,-19 H18 V13 L8,20 H-18Z" fill="none" stroke="#959585" stroke-width="1.6" stroke-linejoin="round"/><path d="M-18,-12 H8 V20 M8,-12 L18,-19" fill="none" stroke="#959585" stroke-width="1.6" stroke-linejoin="round"/><path d="M-10,-10 L12,-15 L12,12 L-10,16Z" fill="#a6d590" stroke="#959585" stroke-width="1.2" stroke-linejoin="round"/></g><g transform="translate(421.7,149)" opacity="0.82"><path d="M-18,-12 L-8,-19 H18 V13 L8,20 H-18Z" fill="none" stroke="#959585" stroke-width="1.6" stroke-linejoin="round"/><path d="M-18,-12 H8 V20 M8,-12 L18,-19" fill="none" stroke="#959585" stroke-width="1.6" stroke-linejoin="round"/><path d="M-15,-8 H-6 V4 H-15Z M-2,-16 H12 V10 H5 V-4 H-2Z" fill="#a6d590" stroke="#959585" stroke-width="1.2" stroke-linejoin="round"/></g><g transform="translate(484,149)" opacity="0.82"><circle cx="0" cy="0" r="18" fill="#dde8ee" stroke="#959585" stroke-width="1.8" stroke-linejoin="round"/><path d="M-18,0 H18 M0,-18 L-8,-6 L-8,6 L0,18 L8,6 L8,-6Z M-8,-6 H8 M-8,6 H8" fill="none" stroke="#959585" stroke-width="1.2" stroke-linejoin="round"/><circle cx="0" cy="-18" r="3" fill="#a6d590" stroke="#959585" stroke-width="1" stroke-linejoin="round"/><circle cx="-18" cy="0" r="3" fill="#a6d590" stroke="#959585" stroke-width="1" stroke-linejoin="round"/><circle cx="18" cy="0" r="3" fill="#a6d590" stroke="#959585" stroke-width="1" stroke-linejoin="round"/><circle cx="0" cy="18" r="3" fill="#a6d590" stroke="#959585" stroke-width="1" stroke-linejoin="round"/><circle cx="-8" cy="-6" r="3" fill="#a6d590" stroke="#959585" stroke-width="1" stroke-linejoin="round"/><circle cx="8" cy="-6" r="3" fill="#a6d590" stroke="#959585" stroke-width="1" stroke-linejoin="round"/><circle cx="-8" cy="6" r="3" fill="#a6d590" stroke="#959585" stroke-width="1" stroke-linejoin="round"/><circle cx="8" cy="6" r="3" fill="#a6d590" stroke="#959585" stroke-width="1" stroke-linejoin="round"/></g><g transform="translate(546,149)" opacity="0.82"><circle cx="-4" cy="1" r="7" fill="#a6d590" stroke="#959585" stroke-width="1.2" stroke-linejoin="round"/><path d="M-18,-14 Q-6,-20 6,-14 Q12,-11 18,-13 M-18,-8 Q-6,-14 6,-8 H18 M-18,12 Q-6,18 6,12 Q12,10 18,12 M-18,18 Q-6,22 6,17 H18 M6,-2 H18 M6,5 H18" fill="none" stroke="#959585" stroke-width="1.5" stroke-linejoin="round"/></g><g transform="translate(609.3,149)" opacity="0.82"><path d="M-19,4 Q6,0 12,-19 L19,-12 Q14,12 -19,16Z" fill="#a6d590" stroke="#959585" stroke-width="1.5" stroke-linejoin="round"/><path d="M-19,16 H19 V-12" fill="#dde" fill-opacity="0.5" stroke="#959585" stroke-width="1.2" stroke-linejoin="round"/></g><g transform="translate(672.3,149)" opacity="0.82"><circle cx="0" cy="0" r="18" fill="none" stroke="#959585" stroke-width="1.6" stroke-linejoin="round"/><circle cx="-7" cy="-8" r="4" fill="#e0e0e0" stroke="#959585" stroke-width="1.2" stroke-linejoin="round"/><circle cx="6" cy="4" r="7" fill="#a6d590" stroke="#959585" stroke-width="1.2" stroke-linejoin="round"/><circle cx="-9" cy="6" r="3" fill="#a6d590" stroke="#959585" stroke-width="1" stroke-linejoin="round"/></g><g transform="translate(733.3,149)" opacity="0.82"><circle cx="3" cy="3" r="17" fill="none" stroke="#959585" stroke-width="1.6" stroke-linejoin="round"/><circle cx="-14" cy="-15" r="4.5" fill="#e0e0e0" stroke="#959585" stroke-width="1.2" stroke-linejoin="round"/><circle cx="9" cy="6" r="7" fill="#a6d590" stroke="#959585" stroke-width="1.2" stroke-linejoin="round"/><circle cx="-5" cy="9" r="3.2" fill="#a6d590" stroke="#959585" stroke-width="1" stroke-linejoin="round"/></g><g transform="translate(810,149)" opacity="0.82"><path d="M-12,-16 V16 H14" fill="none" stroke="#959585" stroke-width="1.5" stroke-linejoin="round"/><rect x="-2" y="-6" width="7" height="12" fill="#cfe5f5" stroke="#6aa8d8" stroke-width="1.3"/><path d="M1.5,-13 V-6 M1.5,6 V13 M-1,-13 h5 M-1,13 h5 M-2,0 h7" stroke="#6aa8d8" stroke-width="1.3"/></g><g transform="translate(871.7,149)" opacity="0.82"><path d="M-19,-18 H7 V-5 H-7 V10 H-19Z" fill="#dce9f5" stroke="#959585" stroke-width="1.6" stroke-linejoin="round"/><rect x="0" y="2" width="15" height="15" fill="#a6d590" stroke="#959585" stroke-width="1.5" stroke-dasharray="3,2"/></g><g transform="translate(935,149)" opacity="0.82"><path d="M-17,-17 V16 H18" fill="none" stroke="#959585" stroke-width="1.4" stroke-linejoin="round"/><rect x="-13" y="3" width="5" height="13" fill="#6ab0e8"/><rect x="-8" y="-8" width="5" height="24" fill="#8ac8e0"/><rect x="-3" y="-19" width="5" height="35" fill="#a6d590"/><rect x="2" y="-9" width="5" height="25" fill="#c6e090"/><rect x="7" y="4" width="5" height="12" fill="#e8d070"/></g><g transform="translate(998.3,149)" opacity="0.82"><path d="M15,-12 V-18 H-16 L3,0 L-16,18 H15 V12 H-4 L10,0 L-4,-12Z" fill="#fff" fill-opacity="0.3" stroke="#6ab0d8" stroke-width="2.8" stroke-linejoin="miter"/></g><g transform="translate(1060.7,149)" opacity="0.82"><circle cx="-9" cy="-10" r="7" fill="#eee" stroke="#959585" stroke-width="1.5" stroke-linejoin="round"/><path d="M-9,-14 v4 l3,2" fill="none" stroke="#959585" stroke-width="1.3" stroke-linejoin="round"/><circle cx="10" cy="-10" r="7" fill="#f0c64a" stroke="#959585" stroke-width="1.5" stroke-linejoin="round"/><rect x="6" y="-14" width="8" height="8" fill="#c8a860"/><path d="M-16,14 H18 M-16,4 V14" stroke="#7a8a8a" stroke-width="1.3"/><path d="M-14,12 l2,-6 l2,6 l2,-6 l2,6 l2,-6 l2,6 l2,-6 l2,6 l2,-5 l2,4 h5" fill="none" stroke="#3a90d0" stroke-width="1.5"/></g><g transform="translate(1122.7,149)" opacity="0.82"><path d="M-16,-19 L14,-16 L17,14 L-10,20 Z" fill="#a6d590" stroke="#959585" stroke-width="1.5" stroke-linejoin="round"/><path d="M-16,14 L18,-13" stroke="#2a90d8" stroke-width="1.8"/><circle cx="18" cy="-13" r="2.5" fill="#2a90d8"/><circle cx="-10" cy="18" r="2.5" fill="#2a90d8"/><path d="M-12,10 l4,-9 l2,6 l4,-9 l2,6 l4,-9 l2,6 l4,-9 l2,6" fill="none" stroke="#3a90d0" stroke-width="1.5"/><path d="M6,-18 L18,-6" stroke="#777" stroke-width="1.2"/></g><g transform="translate(1186,149)" opacity="0.82"><circle cx="-9" cy="-10" r="7" fill="#eee" stroke="#959585" stroke-width="1.5" stroke-linejoin="round"/><path d="M-9,-14 v4 l3,2" fill="none" stroke="#959585" stroke-width="1.3" stroke-linejoin="round"/><rect x="3" y="-17" width="14" height="14" fill="none" stroke="#959585" stroke-width="1.3" stroke-dasharray="3,2"/><path d="M4,-5 L10,-15 L16,-5Z" fill="#a6d590"/><path d="M-16,14 H18 M-16,4 V14" stroke="#7a8a8a" stroke-width="1.3"/><path d="M-14,12 l2,-6 l2,6 l2,-6 l2,6 l2,-6 l2,6 l2,-6 l2,6 l2,-5 l2,4 h5" fill="none" stroke="#3a90d0" stroke-width="1.5"/></g><g transform="translate(1248.3,149)" opacity="0.82"><path d="M-18,-12 L0,-19 L18,-12 V12 L0,19 L-18,12Z" fill="#dcecf5" stroke="#c8dbe6" stroke-width="1.5"/><path d="M0,-14 V14 M-12,-7 L12,7 M12,-7 L-12,7 M-16,0 H16" stroke="#8aa" stroke-width="1.4"/></g><g transform="translate(1311.7,149)" opacity="0.82"><text x="0" y="9" font-family="Liberation Sans" font-size="34" text-anchor="middle" fill="#a0a0a0">{   }</text><circle cx="-6" cy="10" r="2.4" fill="#6ab8e0"/><circle cx="0" cy="10" r="2.4" fill="#6ab8e0"/><circle cx="6" cy="10" r="2.4" fill="#6ab8e0"/></g><g transform="translate(1386.7,149)"><g transform="rotate(-40)"><rect x="-22" y="-7" width="44" height="14" fill="#f2c21c" stroke="#6b6950" stroke-width="1.6"/><path d="M-18,-7 v6" stroke="#6b6950" stroke-width="1.2"/><path d="M-14,-7 v4" stroke="#6b6950" stroke-width="1.2"/><path d="M-10,-7 v6" stroke="#6b6950" stroke-width="1.2"/><path d="M-6,-7 v4" stroke="#6b6950" stroke-width="1.2"/><path d="M-2,-7 v6" stroke="#6b6950" stroke-width="1.2"/><path d="M2,-7 v4" stroke="#6b6950" stroke-width="1.2"/><path d="M6,-7 v6" stroke="#6b6950" stroke-width="1.2"/><path d="M10,-7 v4" stroke="#6b6950" stroke-width="1.2"/><path d="M14,-7 v6" stroke="#6b6950" stroke-width="1.2"/><path d="M18,-7 v4" stroke="#6b6950" stroke-width="1.2"/></g></g><g transform="translate(1448.3,152)"><g transform="translate(5.5,2.5) rotate(-45) scale(1.17)"><path d="M-18.6,0 A18.6,18.6 0 0 1 18.6,0Z" fill="#f2c21c" stroke="#6b6950" stroke-width="1.6"/><path d="M-8,-4 A8,8 0 0 1 8,-4Z" fill="#e6e6e6" stroke="#6b6950" stroke-width="1.4"/><path d="M15.11,-3.45 L18.04,-4.12" stroke="#6b6950" stroke-width="1.3"/><path d="M13.97,-6.73 L16.67,-8.03" stroke="#6b6950" stroke-width="1.3"/><path d="M12.12,-9.66 L14.46,-11.53" stroke="#6b6950" stroke-width="1.3"/><path d="M9.66,-12.12 L11.53,-14.46" stroke="#6b6950" stroke-width="1.3"/><path d="M6.73,-13.97 L8.03,-16.67" stroke="#6b6950" stroke-width="1.3"/><path d="M3.45,-15.11 L4.12,-18.04" stroke="#6b6950" stroke-width="1.3"/><path d="M0.00,-15.50 L0.00,-18.50" stroke="#6b6950" stroke-width="1.3"/><path d="M-3.45,-15.11 L-4.12,-18.04" stroke="#6b6950" stroke-width="1.3"/><path d="M-6.73,-13.97 L-8.03,-16.67" stroke="#6b6950" stroke-width="1.3"/><path d="M-9.66,-12.12 L-11.53,-14.46" stroke="#6b6950" stroke-width="1.3"/><path d="M-12.12,-9.66 L-14.46,-11.53" stroke="#6b6950" stroke-width="1.3"/><path d="M-13.97,-6.73 L-16.67,-8.03" stroke="#6b6950" stroke-width="1.3"/><path d="M-15.11,-3.45 L-18.04,-4.12" stroke="#6b6950" stroke-width="1.3"/></g></g><circle cx="775.7" cy="132" r="1.3" fill="#8f8f8f"/><circle cx="775.7" cy="140.3" r="1.3" fill="#8f8f8f"/><circle cx="775.7" cy="148.6" r="1.3" fill="#8f8f8f"/><circle cx="775.7" cy="156.9" r="1.3" fill="#8f8f8f"/><circle cx="775.7" cy="165.2" r="1.3" fill="#8f8f8f"/><circle cx="1352.7" cy="132" r="1.3" fill="#8f8f8f"/><circle cx="1352.7" cy="140.3" r="1.3" fill="#8f8f8f"/><circle cx="1352.7" cy="148.6" r="1.3" fill="#8f8f8f"/><circle cx="1352.7" cy="156.9" r="1.3" fill="#8f8f8f"/><circle cx="1352.7" cy="165.2" r="1.3" fill="#8f8f8f"/></svg>

<!-- ================= LEFT PANEL ================= -->
<div class="a" style="left:501px;top:180px;width:3px;height:979px;background:linear-gradient(90deg,#b9b9b9 0 1px,#f2f2f2 1px 2px,#c9c9c9 2px 3px)"></div>
<div class="hdr" style="top:180px">Pipeline Browser</div>
<svg class="a" style="left:0;top:182px" width="60" height="26">
 <circle cx="12.4" cy="11.6" r="9.6" fill="#5a5a5a"/><path d="M8.4,7.6 l8,8 M16.4,7.6 l-8,8" stroke="#fff" stroke-width="2.3"/>
 <circle cx="37" cy="11.6" r="9.6" fill="#5a5a5a"/><rect x="31.5" y="9" width="7.5" height="7" fill="none" stroke="#fff" stroke-width="1.4"/><path d="M34.5,9 v-2.5 h7.5 v7 h-3" fill="none" stroke="#fff" stroke-width="1.4"/>
</svg>
<div class="a" style="left:0;top:210px;width:501px;height:288px;background:#fff;border-bottom:1px solid #cfcfcf"></div>
<div class="a" style="left:34px;top:337px;width:143px;height:24px;background:#f8c8d4"></div>
<svg class="a" style="left:0;top:210px" width="240" height="160">
 <path d="M46.5,1 V110 M46.5,50 H58 M46.5,80 H58 M52,110 H58 M70.5,118 V127" stroke="#8a8a8a" stroke-width="1.2" fill="none"/>
 <rect x="41" y="104" width="11" height="11" fill="#fff" stroke="#777" stroke-width="1.2"/><path d="M43.5,109.5 h6" stroke="#222" stroke-width="1.5"/>
 <rect x="41" y="9" width="11" height="19" rx="1" fill="#e0e0e0" stroke="#333" stroke-width="1.6"/><rect x="43" y="12" width="7" height="3" fill="#333"/><rect x="43" y="21" width="3" height="3" fill="#555"/>
 <g id="cube"><path d="M60.7,41.3 L72,38.7 L81.6,44 L70,46Z" fill="#98d47a"/><path d="M60.7,41.3 L70,46 L70,58 L60.7,53.3Z" fill="#5c9c42"/><path d="M70,46 L81.6,44 L81.6,56 L70,58Z" fill="#7cc85c"/><path d="M60.7,41.3 L72,38.7 L81.6,44 L81.6,56 L70,58 L60.7,53.3Z M70,46 V58 M60.7,41.3 L70,46 L81.6,44" fill="none" stroke="#5f6a4a" stroke-width="1.1" stroke-linejoin="round"/></g>
 <g transform="translate(0,30)"><use href="#cube"/></g><g transform="translate(0,60)"><use href="#cube"/></g><g transform="translate(0,90)"><use href="#cube"/></g>
 <g id="eyec" stroke="#9a9a9a" stroke-width="1" fill="none"><path d="M10,49 Q19,42 28,49"/><path d="M10,50 Q19,56 28,50 M12,51 l-1,3 M15,53 l-1,3 M19,54 v3 M23,53 l1,3 M26,51 l1,3"/></g>
 <g transform="translate(0,30)"><use href="#eyec"/></g>
 <g id="eyeo"><path d="M9,109.5 Q19,100 29,109.5 Q19,119 9,109.5Z" fill="#fff" stroke="#555" stroke-width="1.2"/><circle cx="19" cy="109.5" r="5" fill="#1a6ad0"/><circle cx="19" cy="109.5" r="2.8" fill="#111"/><circle cx="17.5" cy="108" r="1.2" fill="#fff"/></g>
 <g transform="translate(0,30)"><use href="#eyeo"/></g>
</svg>
<div class="t" style="left:64px;top:221px;font-size:19.3px">builtin:</div>
<div class="t" style="left:89px;top:251px;font-size:18.9px">first_sim_view.vti</div>
<div class="t" style="left:89px;top:281px;font-size:18.9px">first_sim_view.vti</div>
<div class="t" style="left:89px;top:311px;font-size:18.9px">first_sim_view.vti</div>
<div class="t" style="left:89px;top:341px;font-size:18px;font-weight:bold">Contour1</div>

<!-- tabs -->
<div class="a" style="left:132px;top:501px;width:237px;height:27px;border-radius:6px;background:#fff;box-shadow:0 0 0 1px #d8d8d8,0 1px 1px #c8c8c8"></div>
<div class="a" style="left:132px;top:501px;width:115px;height:27px;border-radius:6px 0 0 6px;background:linear-gradient(#c94453,#b02a3a)"></div>
<div class="t" style="left:145px;top:505px;font-size:18.7px;color:#fff">Properties</div>
<div class="t" style="left:263px;top:505px;font-size:18.7px;color:#1a1a1a">Information</div>

<div class="hdr" style="top:529px">Properties</div>
<svg class="a" style="left:0;top:531px" width="60" height="26">
 <circle cx="12.4" cy="11.6" r="9.6" fill="#5a5a5a"/><path d="M8.4,7.6 l8,8 M16.4,7.6 l-8,8" stroke="#fff" stroke-width="2.3"/>
 <circle cx="37" cy="11.6" r="9.6" fill="#5a5a5a"/><rect x="31.5" y="9" width="7.5" height="7" fill="none" stroke="#fff" stroke-width="1.4"/><path d="M34.5,9 v-2.5 h7.5 v7 h-3" fill="none" stroke="#fff" stroke-width="1.4"/>
</svg>

<!-- buttons -->
<div class="btn" style="left:18px;top:582px;width:113px;background:linear-gradient(#d04a59,#b02838);box-shadow:0 1px 1.5px #a0a0a0;color:#fff"><span class="a" style="left:49px;top:0">Apply</span>
 <svg class="a" style="left:18px;top:4px" width="20" height="20"><path d="M3,9 L7,6 H12 L8,9Z" fill="#ddd"/><rect x="3" y="9" width="5" height="9" fill="#bbb"/><rect x="8" y="9" width="4" height="9" fill="#eee"/><path d="M9,8 L15,3 L13,1.5 L18,1 L17.5,6 L16,4.5 L10.5,10Z" fill="#a6d590"/></svg></div>
<div class="btn" style="left:137px;top:582px;width:112px;background:#efefef;box-shadow:0 0 0 1px #e0e0e0,0 1px 1px #d5d5d5;color:#a9a9a9"><span class="a" style="left:47px;top:0">Reset</span>
 <svg class="a" style="left:17px;top:3px" width="22" height="22"><circle cx="11" cy="11" r="8" fill="none" stroke="#eea0a6" stroke-width="2.4"/><path d="M5.5,16.5 L16.5,5.5" stroke="#eea0a6" stroke-width="2.4"/></svg></div>
<div class="btn" style="left:255px;top:582px;width:120px"><span class="a" style="left:48px;top:0">Delete</span>
 <svg class="a" style="left:19px;top:4px" width="20" height="20"><path d="M3,5 L7,1.5 L10,5.5 L13,1.5 L17,5 L13.5,9.5 L17,14 L13,17.5 L10,13.5 L7,17.5 L3,14 L6.5,9.5Z" fill="#e0201e"/></svg></div>
<div class="btn" style="left:380px;top:582px;width:104px"><span class="a" style="left:48px;top:0">Help</span>
 <svg class="a" style="left:19px;top:3px" width="20" height="22"><path d="M5,7 Q5,2 10,2 Q15,2 15,6.5 Q15,9 11.5,11 Q10,12 10,15" fill="none" stroke="#6b6950" stroke-width="3.6"/><path d="M5,7 Q5,2 10,2 Q15,2 15,6.5 Q15,9 11.5,11 Q10,12 10,15" fill="none" stroke="#a6d590" stroke-width="2"/><circle cx="10" cy="19" r="1.8" fill="#a6d590" stroke="#6b6950" stroke-width="0.8"/></svg></div>

<div class="a" style="left:18px;top:642px;width:428px;height:27px;background:#fff;border-bottom:1px solid #d6d6d6"></div>
<div class="t" style="left:20px;top:647px;font-size:18.3px;color:#a8a8a8">Search ... (use Esc to clear text)</div>
<div class="a" style="left:450px;top:638px;width:35px;height:35px;background:#ececec;border:1px solid #b5b5b5"><svg width="33" height="33"><g transform="translate(16.5,16.5)"><path d="M-2,-9 h4 l0.6,2.8 l2.4,1 l2.4,-1.6 l2.8,2.8 l-1.6,2.4 l1,2.4 l2.8,0.6 v4 l-2.8,0.6 l-1,2.4 l1.6,2.4 l-2.8,2.8 l-2.4,-1.6 l-2.4,1 l-0.6,2.8 h-4 l-0.6,-2.8 l-2.4,-1 l-2.4,1.6 l-2.8,-2.8 l1.6,-2.4 l-1,-2.4 l-2.8,-0.6 v-4 l2.8,-0.6 l1,-2.4 l-1.6,-2.4 l2.8,-2.8 l2.4,1.6 l2.4,-1 Z" fill="none" stroke="#8a8a8a" stroke-width="1.4" transform="scale(0.95)"/><circle r="3.6" fill="none" stroke="#8a8a8a" stroke-width="1.4"/></g></svg></div>

<div class="combo" style="left:25px;top:687px;width:254px;height:24px;font-size:18px;line-height:24px"><span class="a" style="left:19px;top:9px;width:6px;height:6px;border-radius:50%;background:#f2c230;box-shadow:0 0 0 1px #d0a020"></span><span class="a" style="left:39px;top:0">Material</span><div class="rb" style="left:230px;top:1px;width:22px;height:21px"><svg width="22" height="21"><path d="M7,8.5 L11,5 L15,8.5 M7,12.5 L11,16 L15,12.5" fill="none" stroke="#fff" stroke-width="2"/></svg></div></div>
<div class="a" style="left:295px;top:687px;width:190px;height:24px;background:#f1f1f1;border-radius:5px;box-shadow:0 1px 1px #dcdcdc"></div>

<div class="btn" style="left:18px;top:728px;width:98px"><span class="a" style="left:48px;top:0">Edit</span>
 <svg class="a" style="left:18px;top:3px" width="22" height="22"><defs><linearGradient id="pe" x1="0" x2="1"><stop offset="0" stop-color="#3a50c0"/><stop offset="0.5" stop-color="#30b0b0"/><stop offset="1" stop-color="#e8b030"/></linearGradient></defs><rect x="2" y="9" width="18" height="11" fill="url(#pe)" stroke="#6b6950" stroke-width="1"/><circle cx="7" cy="7" r="6" fill="#a6d590" stroke="#6b6950" stroke-width="1"/></svg></div>
<div class="btn" style="left:124px;top:728px;width:66px"><svg class="a" style="left:22px;top:3px" width="22" height="22"><rect x="3" y="9" width="17" height="11" fill="url(#pe)" stroke="#6b6950" stroke-width="1"/><path d="M5,9 a4,4 0 0 1 7,-5 M12,12 a4,4 0 0 1 -8,3" fill="none" stroke="#000" stroke-width="2.5"/></svg></div>
<div class="btn" style="left:198px;top:728px;width:65px"><svg class="a" style="left:20px;top:3px" width="26" height="22"><path d="M1,6 L6,2 V4.5 H19 V2 L24,6 L19,10 V7.5 H6 V10Z" fill="#a6d590" stroke="#6b6950" stroke-width="1"/><path d="M2,16 H24 M2,12 v8 M24,12 v8 M9,13 v6 M16,13 v6" stroke="#6b6950" stroke-width="1.1"/></svg></div>
<div class="btn" style="left:271px;top:728px;width:66px"><svg class="a" style="left:20px;top:3px" width="26" height="22"><path d="M1,6 L6,2 V4.5 H19 V2 L24,6 L19,10 V7.5 H6 V10Z" fill="#a6d590" stroke="#6b6950" stroke-width="1"/><path d="M2,16 H24 M2,12 v8 M24,12 v8 M9,13 v6" stroke="#6b6950" stroke-width="1.1"/><text x="19" y="21" font-family="Liberation Sans" font-weight="bold" font-size="13" text-anchor="middle">c</text></svg></div>
<div class="btn" style="left:345px;top:728px;width:65px"><svg class="a" style="left:20px;top:3px" width="26" height="22"><path d="M1,6 L6,2 V4.5 H19 V2 L24,6 L19,10 V7.5 H6 V10Z" fill="#a6d590" stroke="#6b6950" stroke-width="1"/><path d="M2,16 H24 M2,12 v8 M24,12 v8 M9,13 v6" stroke="#6b6950" stroke-width="1.1"/><text x="19" y="21" font-family="Liberation Sans" font-weight="bold" font-size="13" text-anchor="middle">t</text></svg></div>
<div class="btn" style="left:419px;top:728px;width:65px"><svg class="a" style="left:21px;top:3px" width="24" height="22"><path d="M2,4 h6 l2,2 h8 v12 h-16z" fill="#f3dc8c" stroke="#6b6950" stroke-width="1"/><rect x="4" y="7" width="17" height="11" fill="#f8eba8" stroke="#6b6950" stroke-width="1"/><path d="M13,21 C7,17 5,14 5,11 C5,8 9,7 11,10 L13,11.5 L15,10 C17,7 21,8 21,11 C21,14 19,17 13,21Z" fill="#e43c2e"/></svg></div>

<div class="sh" style="top:778px">Styling</div><div class="ul" style="top:797px"></div>
<div class="t" style="left:17px;top:818px;font-size:18.3px">Opacity</div>
<div class="a" style="left:150px;top:821px;width:215px;height:4px;border-radius:2px;background:#b8303f"></div>
<div class="a" style="left:352px;top:809px;width:27px;height:27px;border-radius:50%;background:#fff;box-shadow:0 0 0 1px #c8c8c8,0 1px 2px #aaa"></div>
<div class="fld" style="left:400px;top:812px;width:85px;height:27px;padding:5px 0 0 2px">1</div>

<div class="sh" style="top:859px">Lighting</div><div class="ul" style="top:878px"></div>
<div class="t" style="left:17px;top:898px;font-size:18.3px">Specular</div>
<div class="a" style="left:150px;top:901px;width:228px;height:4px;border-radius:2px;background:#dcdcdc"></div>
<div class="a" style="left:149px;top:889px;width:28px;height:28px;border-radius:50%;background:#fff;box-shadow:0 0 0 1px #c8c8c8,0 1px 2px #aaa"></div>
<div class="fld" style="left:400px;top:893px;width:85px;height:26px;padding:4px 0 0 2px">0</div>

<div class="sh" style="top:939px">Surface Normals</div><div class="ul" style="top:958px"></div>
<div class="a" style="left:19px;top:973px;width:18px;height:18px;border-radius:4px;background:#fff;box-shadow:0 0 0 1px #c5c5c5,0 1px 1px #bbb"></div>
<div class="t" style="left:44px;top:974px;font-size:18.3px">Compute Point Normals</div>
<div class="a" style="left:19px;top:1005px;width:18px;height:18px;border-radius:4px;background:#f0f0f0;box-shadow:0 0 0 1px #dadada"><svg width="18" height="18"><path d="M4,9 L7.5,13 L14,4" fill="none" stroke="#b5b5b5" stroke-width="1.8"/></svg></div>
<div class="t" style="left:44px;top:1006px;font-size:18.3px;color:#a9a9a9">Splitting</div>
<div class="t" style="left:17px;top:1044px;font-size:18.3px">Feature Angle</div>
<div class="a" style="left:150px;top:1047px;width:228px;height:4px;border-radius:2px;background:#dedede"></div>
<div class="a" style="left:184px;top:1035px;width:28px;height:28px;border-radius:50%;background:#808080"></div>
<div class="fld" style="left:400px;top:1041px;width:85px;height:24px;padding:3px 0 0 2px;color:#b0b0b0">30</div>

<div class="sh" style="top:1085px">Ray Tracing</div><div class="ul" style="top:1104px"></div>
<div class="t" style="left:17px;top:1127px;font-size:18.3px">Scaling Mode</div>
<div class="a" style="left:156px;top:1120px;width:329px;height:22px;background:#fff;border-radius:5px 5px 0 0;overflow:hidden"><div class="t" style="left:12px;top:5px;font-size:18px">All Approximate</div></div>
<div class="a" style="left:0;top:1142px;width:501px;height:16px;background:#ebebeb"></div>

<!-- ================= RIGHT AREA ================= -->
<div class="a" style="left:503px;top:180px;width:1417px;height:35px;background:#ebebeb"></div>
<div class="a" style="left:503px;top:181px;width:1417px;height:3px;background:#f0f0f0"></div>
<div class="a" style="left:1103px;top:181px;width:175px;height:27px;border-radius:6px 0 0 6px;background:linear-gradient(#cf4a58,#b22a3a)"></div>
<svg class="a" style="left:1106px;top:183px" width="24" height="24"><rect x="1" y="1" width="20" height="20" fill="#c23a48" stroke="#2a2a2a" stroke-width="1.8"/><rect x="1" y="1" width="20" height="4" fill="#2a2a2a"/></svg>
<div class="t" style="left:1148px;top:186px;font-size:18px;color:#fff">Layout #1</div>
<svg class="a" style="left:1247px;top:184px" width="22" height="22"><circle cx="11" cy="11" r="9.5" fill="#6e5458"/><path d="M7,7 l8,8 M15,7 l-8,8" stroke="#d8404e" stroke-width="2.4"/></svg>
<div class="a" style="left:1278px;top:181px;width:41px;height:27px;border-radius:0 6px 6px 0;background:#f6f6f6;box-shadow:0 1px 1px #c8c8c8"></div>
<div class="t" style="left:1292px;top:185px;font-size:20px;color:#222">+</div>

<div class="a" style="left:507px;top:215px;width:988px;height:38px;background:linear-gradient(#ececec,#cfcfcf);border-bottom:1px solid #b5b5b5"></div>
<svg class="a" style="left:0;top:0" width="1500" height="260"><g transform="translate(526,234)"><g opacity="1"><rect x="-10" y="-8" width="20" height="15" rx="2.5" fill="#cfcfcf" stroke="#808080" stroke-width="1.3"/><rect x="-5" y="-10.5" width="8" height="3" rx="1" fill="#cfcfcf" stroke="#808080" stroke-width="1"/><circle cx="0" cy="-0.5" r="5" fill="#e6f2f8" stroke="#808080" stroke-width="1.4"/><circle cx="0" cy="-0.5" r="3" fill="#a9d8f4"/><circle cx="-7.5" cy="-5.5" r="1" fill="#e23"/><path d="M-8,9 q4,-8 10,-4 q4,3 0,8" fill="none" stroke="#e02a22" stroke-width="3"/><path d="M-11,6 l6,-1 l-3,6z" fill="#e02a22"/></g></g><g transform="translate(564.5,234)"><g opacity="0.45"><rect x="-10" y="-8" width="20" height="15" rx="2.5" fill="#cfcfcf" stroke="#808080" stroke-width="1.3"/><rect x="-5" y="-10.5" width="8" height="3" rx="1" fill="#cfcfcf" stroke="#808080" stroke-width="1"/><circle cx="0" cy="-0.5" r="5" fill="#e6f2f8" stroke="#808080" stroke-width="1.4"/><circle cx="0" cy="-0.5" r="3" fill="#a9d8f4"/><circle cx="-7.5" cy="-5.5" r="1" fill="#e23"/><path d="M8,9 q-4,-8 -10,-4 q-4,3 0,8" fill="none" stroke="#a6d590" stroke-width="3"/><path d="M11,6 l-6,-1 l3,6z" fill="#a6d590"/></g></g><g transform="translate(610.6,234)"><path d="M-12,-8 v-4 h4 M12,-8 v-4 h-4 M-12,8 v4 h4 M12,8 v4 h-4" fill="none" stroke="#888" stroke-width="1.4"/><g opacity="1" transform="scale(0.95)"><rect x="-10" y="-8" width="20" height="15" rx="2.5" fill="#cfcfcf" stroke="#808080" stroke-width="1.3"/><rect x="-5" y="-10.5" width="8" height="3" rx="1" fill="#cfcfcf" stroke="#808080" stroke-width="1"/><circle cx="0" cy="-0.5" r="5" fill="#e6f2f8" stroke="#808080" stroke-width="1.4"/><circle cx="0" cy="-0.5" r="3" fill="#a9d8f4"/><circle cx="-7.5" cy="-5.5" r="1" fill="#e23"/></g></g><g transform="translate(657.5,234)"><text x="0" y="6" font-family="Liberation Sans" font-weight="bold" font-size="17" text-anchor="middle" fill="#5f6044">3D</text></g><g transform="translate(695,234)"><g opacity="1"><rect x="-10" y="-8" width="20" height="15" rx="2.5" fill="#cfcfcf" stroke="#808080" stroke-width="1.3"/><rect x="-5" y="-10.5" width="8" height="3" rx="1" fill="#cfcfcf" stroke="#808080" stroke-width="1"/><circle cx="0" cy="-0.5" r="5" fill="#e6f2f8" stroke="#808080" stroke-width="1.4"/><circle cx="0" cy="-0.5" r="3" fill="#a9d8f4"/><circle cx="-7.5" cy="-5.5" r="1" fill="#e23"/><path d="M1,1 L9,11" stroke="#6b6950" stroke-width="4.5" stroke-linecap="round"/><path d="M1,1 L9,11" stroke="#e8b830" stroke-width="2.6" stroke-linecap="round"/></g></g><g transform="translate(741.8,234)"><rect x="-11" y="-11" width="22" height="22" fill="none" stroke="#888" stroke-width="1.2" stroke-dasharray="2.5,2"/><path d="M0,-7 v14 M-7,0 h14" stroke="#6b6950" stroke-width="5"/><path d="M0,-6 v12 M-6,0 h12" stroke="#8fd070" stroke-width="3"/></g><g transform="translate(779.4,234)"><rect x="-11" y="-11" width="22" height="22" fill="none" stroke="#888" stroke-width="1.2" stroke-dasharray="2.5,2"/><rect x="-8" y="-2.5" width="16" height="5" fill="#e02a30"/></g><g transform="translate(816.9,234)"><rect x="-11" y="-11" width="22" height="22" fill="none" stroke="#888" stroke-width="1.2" stroke-dasharray="2.5,2"/><path d="M-2,-9 v10 M-7,-4 h10" stroke="#8fd070" stroke-width="3"/><rect x="-8" y="3" width="11" height="3" fill="#e02a30"/><path d="M6,7 l6.5,6.5 M5,6 l4.6,0.4 l-4.2,4.2z" stroke="#6a6a6a" stroke-width="1.8" fill="#6a6a6a"/></g><g transform="translate(863.7,234)"><rect x="-11" y="-11" width="22" height="22" fill="none" stroke="#888" stroke-width="1.2" stroke-dasharray="2.5,2"/><path d="M-1,-7 L7,6 H-9Z" fill="#a6d590" stroke="#6b6950" stroke-width="1.2"/><path d="M6,7 l6.5,6.5 M5,6 l4.6,0.4 l-4.2,4.2z" stroke="#6a6a6a" stroke-width="1.8" fill="#6a6a6a"/></g><g transform="translate(903,234)"><rect x="-11" y="-11" width="22" height="22" fill="none" stroke="#888" stroke-width="1.2" stroke-dasharray="2.5,2"/><circle cx="0" cy="-7" r="2.3" fill="#d03030"/><circle cx="-6" cy="5" r="2.3" fill="#d03030"/><path d="M-6,5 L0,-7" stroke="#ccc" stroke-width="0.8"/><path d="M6,7 l6.5,6.5 M5,6 l4.6,0.4 l-4.2,4.2z" stroke="#6a6a6a" stroke-width="1.8" fill="#6a6a6a"/></g><g transform="translate(941.7,234)"><rect x="-12" y="-11" width="20" height="20" fill="none" stroke="#888" stroke-width="1.2" stroke-dasharray="2.5,2"/><path d="M-9,-2 L-3,-8 H9 V3 L3,8 H-9Z" fill="#a6d590" stroke="#6b6950" stroke-width="1.2"/><path d="M-9,-2 H3 V8 M3,-2 L9,-8" fill="none" stroke="#6b6950" stroke-width="1"/><path d="M1,8 l6.5,6.5 M0,7 l4.6,0.4 l-4.2,4.2z" stroke="#6a6a6a" stroke-width="1.8" fill="#6a6a6a"/></g><g transform="translate(980,234)"><rect x="-12" y="-11" width="24" height="20" fill="none" stroke="#888" stroke-width="1.2" stroke-dasharray="2.5,2"/><circle cx="-8" cy="-3" r="1.8" fill="#e03030"/><circle cx="-4" cy="-1" r="1.8" fill="#e03030"/><circle cx="-8" cy="4" r="1.8" fill="#e03030"/><circle cx="-4" cy="4" r="1.8" fill="#e03030"/><circle cx="1" cy="-10" r="1.8" fill="#e03030"/><circle cx="8" cy="-6" r="1.8" fill="#e03030"/><circle cx="8" cy="4" r="1.8" fill="#e03030"/><path d="M2,7 l6.5,6.5 M1,6 l4.6,0.4 l-4.2,4.2z" stroke="#6a6a6a" stroke-width="1.8" fill="#6a6a6a"/></g><g transform="translate(1016.7,234)"><path d="M-11,-11 H10 L3,0 L11,11 H-4 L-11,2Z" fill="none" stroke="#888" stroke-width="1.2" stroke-dasharray="2.5,2"/><path d="M-7,1 L2,-5 V7Z" fill="#a6d590" stroke="#6b6950" stroke-width="1.2"/></g><g transform="translate(1055,234)"><path d="M-11,-11 H9 L3,0 L11,11 H-4 L-11,2Z" fill="none" stroke="#888" stroke-width="1.2" stroke-dasharray="2.5,2"/><circle cx="-6" cy="-7" r="2.2" fill="#c03030"/><circle cx="0" cy="-4" r="2.2" fill="#c03030"/><circle cx="-6" cy="2" r="2.2" fill="#c03030"/><circle cx="0" cy="6" r="2.2" fill="#c03030"/><circle cx="4" cy="-8" r="2.2" fill="#c03030"/><circle cx="5" cy="9" r="2.2" fill="#c03030"/></g><g transform="translate(1093,234)"><rect x="-11" y="-11" width="22" height="22" fill="none" stroke="#888" stroke-width="1.2" stroke-dasharray="2.5,2"/><circle cx="-6" cy="-5" r="3.5" fill="#2a90e0"/><circle cx="-6" cy="7" r="3.5" fill="#2a90e0"/><circle cx="5" cy="2" r="5" fill="#a6d590" stroke="#6b6950" stroke-width="1.2"/><path d="M8,7 l6.5,6.5 M7,6 l4.6,0.4 l-4.2,4.2z" stroke="#6a6a6a" stroke-width="1.8" fill="#6a6a6a"/></g><g transform="translate(1131.8,234)"><rect x="-12" y="-10" width="10" height="20" fill="none" stroke="#888" stroke-width="1.2" stroke-dasharray="2.5,2"/><path d="M-8,-2 L-2,-8 H11 V4 L5,9 H-8Z" fill="#a6d590" stroke="#6b6950" stroke-width="1.2"/><circle cx="-1" cy="2" r="1.6" fill="#e8b020"/><circle cx="4" cy="-3" r="1.6" fill="#e8b020"/><circle cx="6" cy="3" r="1.6" fill="#e8b020"/><circle cx="-11" cy="-8" r="1.6" fill="#2a90e0"/><circle cx="-11" cy="8" r="1.6" fill="#2a90e0"/><path d="M3,9 l6.5,6.5 M2,8 l4.6,0.4 l-4.2,4.2z" stroke="#6a6a6a" stroke-width="1.8" fill="#6a6a6a"/></g><g transform="translate(1169.3,234)"><g opacity="0.6"><path d="M-10,-4 L-3,-11 H10 V5 L3,11 H-10Z" fill="#f0c850" stroke="#999" stroke-width="1.2"/><path d="M-10,-4 H3 V11 M3,-4 L10,-11" fill="none" stroke="#999" stroke-width="1"/><path d="M6,6 l6.5,6.5 M5,5 l4.6,0.4 l-4.2,4.2z" stroke="#6a6a6a" stroke-width="1.8" fill="#6a6a6a"/></g></g><g transform="translate(1209,234)"><g opacity="0.6"><circle cx="-4" cy="-4" r="3.5" fill="#e8c840" stroke="#999" stroke-width="1"/><path d="M1,2 l6.5,6.5 M0,1 l4.6,0.4 l-4.2,4.2z" stroke="#6a6a6a" stroke-width="1.8" fill="#6a6a6a"/></g></g><g transform="translate(1246.9,234)"><path d="M-3,-9 L5,4 H-11Z" fill="#a6d590" stroke="#6b6950" stroke-width="1.3"/><path d="M3,4 l6.5,6.5 M2,3 l4.6,0.4 l-4.2,4.2z" stroke="#6a6a6a" stroke-width="1.8" fill="#6a6a6a"/></g><g transform="translate(1284,234)"><circle cx="-1" cy="-9" r="2.2" fill="#d03030"/><circle cx="-8" cy="3" r="2.2" fill="#d03030"/><path d="M-8,3 L-1,-9 L4,-1" stroke="#ccc" stroke-width="0.8" fill="none"/><path d="M4,4 l6.5,6.5 M3,3 l4.6,0.4 l-4.2,4.2z" stroke="#6a6a6a" stroke-width="1.8" fill="#6a6a6a"/></g><g transform="translate(1321.9,234)"><path d="M-5,-2 L1,8 H-11Z" fill="#a6d590" stroke="#6b6950" stroke-width="1.3"/><text x="6" y="3" font-family="Liberation Sans" font-size="19" text-anchor="middle" fill="#555">?</text></g><g transform="translate(1361,234)"><circle cx="-5" cy="6" r="3.5" fill="#e02a22"/><text x="5" y="3" font-family="Liberation Sans" font-size="19" text-anchor="middle" fill="#555">?</text></g><g transform="translate(1398.7,234)"><path d="M0,-10 v20 M-10,0 h20" stroke="#7ab8e0" stroke-width="6"/></g><g transform="translate(1437,234)"><path d="M-10,0 h20" stroke="#7ab8e0" stroke-width="5.5"/></g><g transform="translate(1475.6,234)"><g opacity="0.45"><rect x="-8" y="-6" width="16" height="17" rx="1.5" fill="#bbb" stroke="#888" stroke-width="1"/><rect x="-9.5" y="-9" width="19" height="3.5" rx="1.5" fill="#aaa"/><rect x="-3" y="-11.5" width="6" height="3" rx="1" fill="#aaa"/><path d="M-4,-3 v12 M0,-3 v12 M4,-3 v12" stroke="#999" stroke-width="1"/></g></g><circle cx="587" cy="218" r="1.1" fill="#8f8f8f"/><circle cx="587" cy="224" r="1.1" fill="#8f8f8f"/><circle cx="587" cy="230" r="1.1" fill="#8f8f8f"/><circle cx="587" cy="236" r="1.1" fill="#8f8f8f"/><circle cx="587" cy="242" r="1.1" fill="#8f8f8f"/><circle cx="587" cy="248" r="1.1" fill="#8f8f8f"/><circle cx="633" cy="218" r="1.1" fill="#8f8f8f"/><circle cx="633" cy="224" r="1.1" fill="#8f8f8f"/><circle cx="633" cy="230" r="1.1" fill="#8f8f8f"/><circle cx="633" cy="236" r="1.1" fill="#8f8f8f"/><circle cx="633" cy="242" r="1.1" fill="#8f8f8f"/><circle cx="633" cy="248" r="1.1" fill="#8f8f8f"/><circle cx="717.5" cy="218" r="1.1" fill="#8f8f8f"/><circle cx="717.5" cy="224" r="1.1" fill="#8f8f8f"/><circle cx="717.5" cy="230" r="1.1" fill="#8f8f8f"/><circle cx="717.5" cy="236" r="1.1" fill="#8f8f8f"/><circle cx="717.5" cy="242" r="1.1" fill="#8f8f8f"/><circle cx="717.5" cy="248" r="1.1" fill="#8f8f8f"/><circle cx="840.5" cy="218" r="1.1" fill="#8f8f8f"/><circle cx="840.5" cy="224" r="1.1" fill="#8f8f8f"/><circle cx="840.5" cy="230" r="1.1" fill="#8f8f8f"/><circle cx="840.5" cy="236" r="1.1" fill="#8f8f8f"/><circle cx="840.5" cy="242" r="1.1" fill="#8f8f8f"/><circle cx="840.5" cy="248" r="1.1" fill="#8f8f8f"/></svg>
<div class="t" style="left:1629px;top:225px;font-size:18.4px;font-weight:bold;color:#111">RenderView1</div><div class="a" style="left:1629px;top:243px;width:115px;height:2px;background:#111"></div>
<div class="a" style="left:1760px;top:216px;width:37px;height:37px;background:linear-gradient(#f2f2f2,#e8e8e8);border:1px solid #c4c4c4"><svg width="35" height="35"><rect x="9" y="9" width="18" height="18" fill="#cdd6f0" stroke="#8a8a8a" stroke-width="1.1"/><path d="M18,9 v18" stroke="#8a8a8a" stroke-width="1.1"/></svg></div>
<div class="a" style="left:1799px;top:216px;width:37px;height:37px;background:linear-gradient(#f2f2f2,#e8e8e8);border:1px solid #c4c4c4"><svg width="35" height="35"><rect x="9" y="9" width="18" height="18" fill="#cdd6f0" stroke="#8a8a8a" stroke-width="1.1"/><path d="M9,18 h18" stroke="#8a8a8a" stroke-width="1.1"/></svg></div>
<div class="a" style="left:1838px;top:216px;width:37px;height:37px;background:linear-gradient(#f2f2f2,#e8e8e8);border:1px solid #c4c4c4"><svg width="35" height="35"><rect x="7" y="7" width="22" height="22" fill="#f4f4f4" stroke="#2a2a2a" stroke-width="2"/><rect x="7" y="7" width="22" height="5" fill="#2a2a2a"/></svg></div>
<div class="a" style="left:1877px;top:216px;width:37px;height:37px;background:linear-gradient(#f2f2f2,#e8e8e8);border:1px solid #c4c4c4"><svg width="35" height="35"><circle cx="18" cy="18" r="11" fill="#575757"/><path d="M13.5,13.5 l9,9 M22.5,13.5 l-9,9" stroke="#fff" stroke-width="2.8"/></svg></div>

<!-- render view -->
<div class="a" style="left:507px;top:255px;width:1409px;height:900px;background:#0b42d8"></div>
<div class="a" style="left:510px;top:258px;width:1403px;height:894px;background:#f6f0e4"></div>
<div class="a" style="left:511px;top:259px;width:1401px;height:891px;background:#625d5a;overflow:hidden">
<svg width="1401" height="891" style="position:absolute;left:0;top:0" viewBox="511 259 1401 891"><defs><clipPath id="plate"><polygon points="1178,510 1358,690 1247,895 1097,713"/></clipPath><linearGradient id="cmap" x1="0" y1="1" x2="0" y2="0"><stop offset="0" stop-color="#16187a"/><stop offset="0.1" stop-color="#2030a0"/><stop offset="0.2" stop-color="#3562d2"/><stop offset="0.3" stop-color="#48aef0"/><stop offset="0.4" stop-color="#9ad8ee"/><stop offset="0.5" stop-color="#e8f2d4"/><stop offset="0.6" stop-color="#f4dc96"/><stop offset="0.7" stop-color="#f0ac62"/><stop offset="0.8" stop-color="#e07a3a"/><stop offset="0.9" stop-color="#c44a2a"/><stop offset="1" stop-color="#9a1a22"/></linearGradient><linearGradient id="edge" gradientUnits="userSpaceOnUse" x1="1269" y1="599" x2="1261" y2="607"><stop offset="0" stop-color="#6e7470"/><stop offset="0.4" stop-color="#a9aea8"/><stop offset="0.7" stop-color="#8d938e"/><stop offset="1" stop-color="#5c615f"/></linearGradient><filter id="blur1"><feGaussianBlur stdDeviation="1.3"/></filter><filter id="blur2" x="-20%" y="-20%" width="140%" height="140%"><feGaussianBlur stdDeviation="1.7"/></filter></defs><polygon points="935,364 1326,347 1651,633 1434,977 1075,1127 826,767" fill="#35335a"/><polygon points="1075,1127 1434,977 1242,765" fill="#343157"/><polygon points="935,364 826,767 1220,688" fill="#322f48"/><polygon points="1651,633 1434,977 1220,741" fill="#322f48"/><polygon points="1178,510 1358,690 1247,895 1097,713" fill="#4f5452"/><g clip-path="url(#plate)"><polygon points="935,364 1326,347 1651,633 1258,731" fill="#555868"/><polygon points="1651,633 1434,977 1220,741" fill="#4f524e"/><polygon points="1178,508 1360,690 1352,698 1170,516" fill="url(#edge)"/><polygon points="1097,713 1178,510 1183,514 1103,713" fill="#5a5e60"/><polygon points="1097,713 1247,895 1249,888 1101,710" fill="#3c4040"/><polygon points="1358,690 1247,895 1243,890 1352,690" fill="#5c605c"/></g><g filter="url(#blur2)"><polygon points="1160,612 1203,692 1198,704 1137,670" fill="#545857"/><polyline points="1159,616 1152,634 1144,654 1137,669" fill="none" stroke="#4a4f4f" stroke-width="4"/><polyline points="1137,670 1143,678 1150,681 1156,687 1164,688 1170,694 1178,695 1184,700 1192,700 1198,705" fill="none" stroke="#3c4142" stroke-width="7" stroke-linejoin="miter"/><polyline points="1163,610 1167,622 1172,630 1176,640 1180,648 1184,657 1189,665 1192,675 1198,683 1202,692" fill="none" stroke="#aeb29b" stroke-width="10" stroke-linejoin="miter"/><polyline points="1167,622 1172,626 M1176,640 L1181,644 M1184,657 L1189,660 M1192,675 L1197,679" fill="none" stroke="#a6aa94" stroke-width="4"/></g><g filter="url(#blur2)"><polygon points="1213,712 1288,743 1262,803" fill="#545856"/><polyline points="1286,748 1275,775 1262,800" fill="none" stroke="#5f645f" stroke-width="6"/><polyline points="1212,714 1216,726 1222,731 1224,744 1230,750 1232,762 1238,768 1241,780 1248,786 1252,796 1262,803" fill="none" stroke="#3a3f40" stroke-width="6.5" stroke-linejoin="miter"/><polyline points="1213,710 1224,714 1232,720 1242,722 1250,728 1260,730 1268,735 1278,738 1287,743" fill="none" stroke="#aeb29b" stroke-width="10" stroke-linejoin="miter"/></g><rect x="1759" y="844" width="21" height="293" fill="url(#cmap)"/><path d="M1776,844.0 H1791" stroke="#e8e8e8" stroke-width="1.6"/><text x="1798" y="851.0" font-family="Liberation Sans" font-size="22.7" fill="#f4f4f4">3.0e+00</text><path d="M1776,873.2 H1791" stroke="#e8e8e8" stroke-width="1.6"/><text x="1798" y="880.2" font-family="Liberation Sans" font-size="22.7" fill="#f4f4f4">2.8</text><path d="M1776,902.5 H1791" stroke="#e8e8e8" stroke-width="1.6"/><text x="1798" y="909.5" font-family="Liberation Sans" font-size="22.7" fill="#f4f4f4">2.6</text><path d="M1776,931.7 H1791" stroke="#e8e8e8" stroke-width="1.6"/><text x="1798" y="938.7" font-family="Liberation Sans" font-size="22.7" fill="#f4f4f4">2.4</text><path d="M1776,961.0 H1791" stroke="#e8e8e8" stroke-width="1.6"/><text x="1798" y="968.0" font-family="Liberation Sans" font-size="22.7" fill="#f4f4f4">2.2</text><path d="M1776,990.2 H1791" stroke="#e8e8e8" stroke-width="1.6"/><text x="1798" y="997.2" font-family="Liberation Sans" font-size="22.7" fill="#f4f4f4">2</text><path d="M1776,1019.4 H1791" stroke="#e8e8e8" stroke-width="1.6"/><text x="1798" y="1026.4" font-family="Liberation Sans" font-size="22.7" fill="#f4f4f4">1.8</text><path d="M1776,1048.7 H1791" stroke="#e8e8e8" stroke-width="1.6"/><text x="1798" y="1055.7" font-family="Liberation Sans" font-size="22.7" fill="#f4f4f4">1.6</text><path d="M1776,1077.9 H1791" stroke="#e8e8e8" stroke-width="1.6"/><text x="1798" y="1084.9" font-family="Liberation Sans" font-size="22.7" fill="#f4f4f4">1.4</text><path d="M1776,1107.2 H1791" stroke="#e8e8e8" stroke-width="1.6"/><text x="1798" y="1114.2" font-family="Liberation Sans" font-size="22.7" fill="#f4f4f4">1.2</text><path d="M1776,1136.4 H1791" stroke="#e8e8e8" stroke-width="1.6"/><text x="1798" y="1143.4" font-family="Liberation Sans" font-size="22.7" fill="#f4f4f4">1.0e+00</text><text transform="translate(1903,990) rotate(-90)" text-anchor="middle" font-family="Liberation Sans" font-size="24.5" fill="#f4f4f4">Material</text><path d="M623,1039 L645,992" stroke="#d8c830" stroke-width="1.5"/><path d="M638,1000 L646,986 L648,1002Z" fill="#f0e000"/><path d="M623,1039 L578,1048" stroke="#20c020" stroke-width="1.5"/><path d="M584,1043 L572,1050 L585,1053Z" fill="#10d010"/><path d="M623,1039 L655,1075" stroke="#a03030" stroke-width="1.5"/><path d="M650,1074 L661,1082 L658,1070Z" fill="#e01010"/><text x="642" y="1001" font-family="Liberation Sans" font-size="21" fill="#fff">Y</text><text x="584" y="1049" font-family="Liberation Sans" font-size="21" fill="#fff">Z</text><text x="655" y="1075" font-family="Liberation Sans" font-size="21" fill="#fff">X</text></svg>
</div>

<!-- status bar -->
<div class="a" style="left:0;top:1158px;width:1920px;height:2px;background:#c0c0c0"></div>
<div class="a" style="left:595px;top:1166px;width:29px;height:29px;background:#ececec;border:1px solid #c8c8c8"><svg width="27" height="27"><path d="M9,9 l9,9 M18,9 l-9,9" stroke="#ee8a90" stroke-width="3.2"/></svg></div>
<div class="a" style="left:627px;top:1162px;width:561px;height:36px;background:#ebebeb;border-left:2px solid #c8c8c8;border-top:2px solid #c8c8c8"></div>
<div class="a" style="left:1196px;top:1165px;width:591px;height:32px;background:#fff;border:1px solid #b8b8b8;border-radius:2px"></div>
<div class="a" style="left:1197px;top:1166px;width:250px;height:30px;background:linear-gradient(#d8f0d0,#b8e2ac);border-right:1px solid #8ac07a"></div>
<div class="t" style="left:1313px;top:1172px;font-size:18.4px;color:#1a1a1a">Erays-MacBook.lan: 3.4 GiB/8.0 GiB 42.5%</div>
<div class="a" style="left:1797px;top:1163px;width:55px;height:34px;background:#ececec;border:1px solid #c2c2c2"></div>
<svg class="a" style="left:1800px;top:1170px" width="22" height="20"><path d="M10,1 L19,17 H1Z" fill="#f6c21c" stroke="#d8a000" stroke-width="1"/><path d="M10,6 v6" stroke="#333" stroke-width="1.8"/><circle cx="10" cy="14.5" r="1" fill="#333"/></svg>
<div class="t" style="left:1823px;top:1174px;font-size:15px">1</div>
<div class="a" style="left:1860px;top:1163px;width:59px;height:34px;background:#ececec;border:1px solid #c2c2c2"></div>
<svg class="a" style="left:1866px;top:1171px" width="20" height="20"><path d="M6,1.5 h8 l5,5 v8 l-5,5 h-8 l-5,-5 v-8z" fill="#d8221c"/><path d="M10,5 v7" stroke="#fff" stroke-width="2.4"/><circle cx="10" cy="15" r="1.3" fill="#fff"/></svg>
<div class="t" style="left:1889px;top:1174px;font-size:15px">5</div>
</body></html>
